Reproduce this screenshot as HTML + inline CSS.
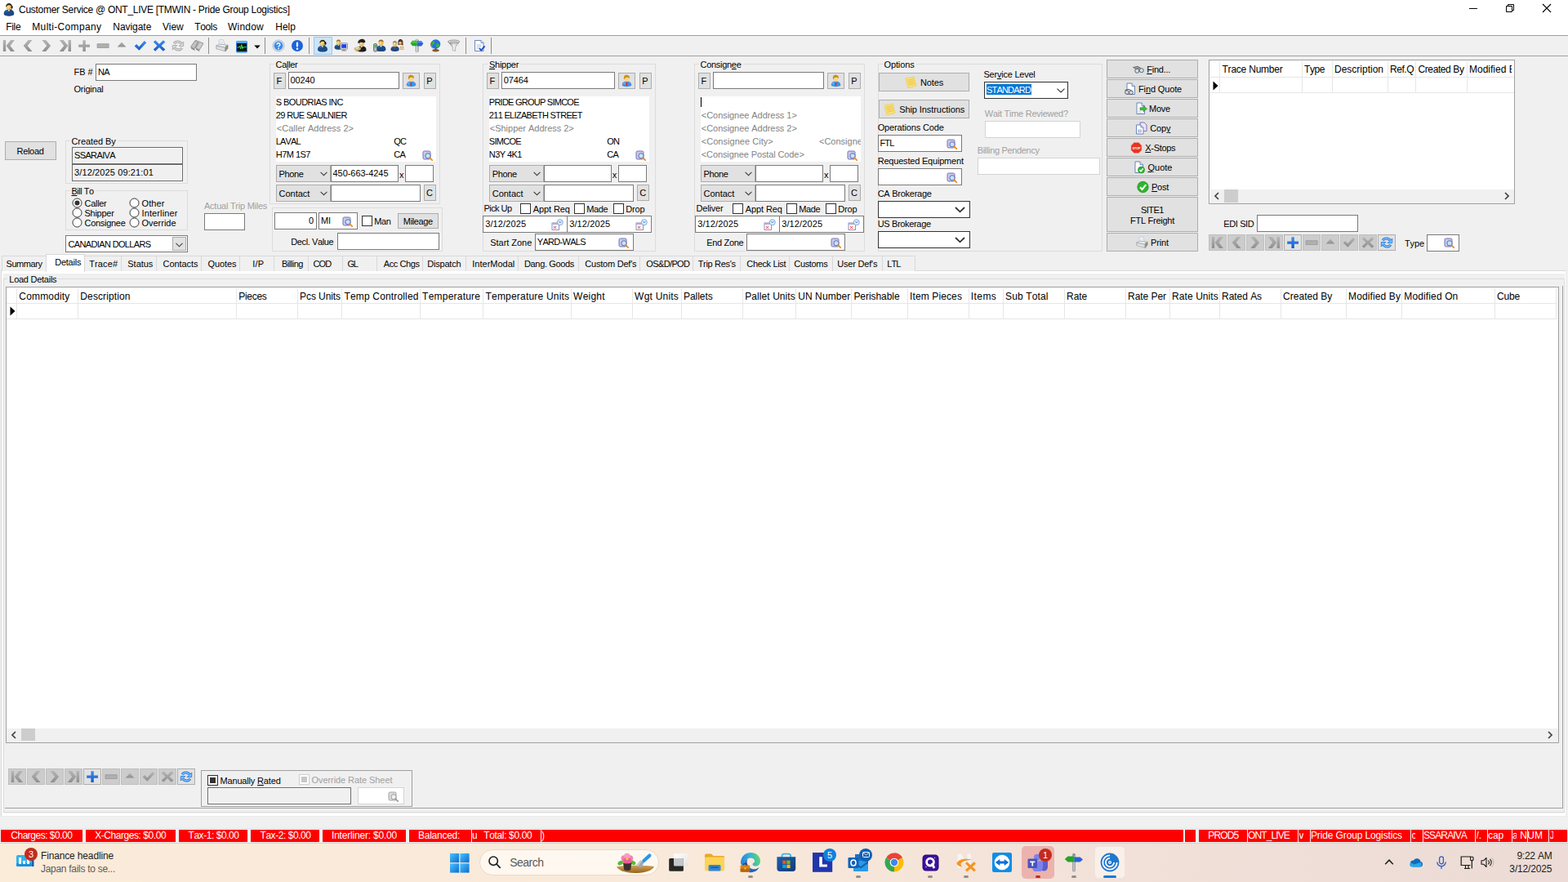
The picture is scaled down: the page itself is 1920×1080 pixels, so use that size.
<!DOCTYPE html><html lang="en"><head><meta charset="utf-8"><title>Customer Service @ ONT_LIVE [TMWIN - Pride Group Logistics]</title><style>
html,body{margin:0;padding:0}
body{width:1920px;height:1080px;position:relative;overflow:hidden;background:#f0f0f0;font-family:"Liberation Sans",sans-serif;font-size:11px;color:#000}
body div,body span,body svg{position:absolute;box-sizing:border-box}
span{white-space:nowrap}
.t{font-size:11px;color:#000}
.h{font-size:12px;color:#000}
span{font-kerning:none}
.s{font-size:12px;color:#000}
.g{color:#838383}
.d{color:#a0a0a0}
.in{background:#fff;border:1px solid #7a7a7a}
.btn{background:#e1e1e1;border:1px solid #adadad}
.grp{border:1px solid #dcdcdc}
.lbl{background:#f0f0f0;padding:0 2px}
.w{color:#fff}
u{text-decoration:underline;text-underline-offset:1px}
</style></head><body>
<svg width="0" height="0" style="position:absolute;left:0;top:0;overflow:hidden"><defs><linearGradient id="gg" x1="0" y1="0" x2="0" y2="1"><stop offset="0" stop-color="#b6b6b6"/><stop offset="1" stop-color="#8e8e8e"/></linearGradient><linearGradient id="gb" x1="0" y1="0" x2="0" y2="1"><stop offset="0" stop-color="#3f8ff0"/><stop offset="1" stop-color="#1558c8"/></linearGradient><symbol id="i-first" viewBox="0 0 16 16"><rect x="0.8" y="1" width="3.4" height="14" fill="url(#gg)"/><path d="M15 1L10.1 1L4.6 8L10.1 15L15 15L9.5 8Z" fill="url(#gg)"/></symbol><symbol id="i-prev" viewBox="0 0 16 16"><path d="M13.5 1L8.6 1L2.7 8L8.6 15L13.5 15L7.6000000000000005 8Z" fill="url(#gg)"/></symbol><symbol id="i-next" viewBox="0 0 16 16"><path d="M2.3 1L7.2 1L13.1 8L7.2 15L2.3 15L8.2 8Z" fill="url(#gg)"/></symbol><symbol id="i-last" viewBox="0 0 16 16"><rect x="11.6" y="1" width="3.4" height="14" fill="url(#gg)"/><path d="M0.8 1L5.7 1L11.2 8L5.7 15L0.8 15L6.299999999999999 8Z" fill="url(#gg)"/></symbol><symbol id="i-plus" viewBox="0 0 16 16"><path d="M6.4 1.2H9.8V6.4H15V9.8H9.8V15H6.4V9.8H1.2V6.4H6.4Z" fill="url(#gg)"/></symbol><symbol id="i-plusb" viewBox="0 0 16 16"><path d="M6.4 1.2H9.8V6.4H15V9.8H9.8V15H6.4V9.8H1.2V6.4H6.4Z" fill="url(#gb)"/></symbol><symbol id="i-minus" viewBox="0 0 16 16"><rect x="1.1" y="5.8" width="14" height="4.6" fill="#b0b0b0" stroke="#969696" stroke-width="0.8"/></symbol><symbol id="i-up" viewBox="0 0 16 16"><path d="M2.7 9.5L8 3.4L13.3 9.5Z" fill="url(#gg)"/></symbol><symbol id="i-check" viewBox="0 0 16 16"><path d="M0.6 8.6L3.2 6L6.2 9.2L12.8 2L15.3 4.3L6.4 13.8Z" fill="url(#gb)"/></symbol><symbol id="i-checkg" viewBox="0 0 16 16"><path d="M0.6 8.6L3.2 6L6.2 9.2L12.8 2L15.3 4.3L6.4 13.8Z" fill="url(#gg)"/></symbol><symbol id="i-x" viewBox="0 0 16 16"><path d="M0.8 3.4L3.2 1.2L8 6L12.8 1.2L15.4 3.4L10.5 8L15.4 12.4L12.8 14.8L8 10L3.2 14.8L0.8 12.4L5.5 8Z" fill="url(#gb)"/></symbol><symbol id="i-xg" viewBox="0 0 16 16"><path d="M0.8 3.4L3.2 1.2L8 6L12.8 1.2L15.4 3.4L10.5 8L15.4 12.4L12.8 14.8L8 10L3.2 14.8L0.8 12.4L5.5 8Z" fill="url(#gg)"/></symbol><symbol id="i-refresh" viewBox="0 0 16 16"><path d="M3.1 5.4A5.4 5.4 0 0 1 12.1 5.3" stroke="#a2a2a2" stroke-width="3" fill="none"/><path d="M12.9 10.6A5.4 5.4 0 0 1 3.9 10.7" stroke="#a2a2a2" stroke-width="3" fill="none"/><path d="M14.7 3V8.5H9.2Z" fill="#d9d9d9" stroke="#a2a2a2" stroke-width=".8" stroke-linejoin="round"/><path d="M1.3 13V7.5H6.8Z" fill="#d9d9d9" stroke="#a2a2a2" stroke-width=".8" stroke-linejoin="round"/><path d="M3.1 5.4A5.4 5.4 0 0 1 12.1 5.3" stroke="#d9d9d9" stroke-width="1.5" fill="none"/><path d="M12.9 10.6A5.4 5.4 0 0 1 3.9 10.7" stroke="#d9d9d9" stroke-width="1.5" fill="none"/></symbol><symbol id="i-refreshb" viewBox="0 0 16 16"><path d="M3.1 5.4A5.4 5.4 0 0 1 12.1 5.3" stroke="#1f73d6" stroke-width="3" fill="none"/><path d="M12.9 10.6A5.4 5.4 0 0 1 3.9 10.7" stroke="#1f73d6" stroke-width="3" fill="none"/><path d="M14.7 3V8.5H9.2Z" fill="#7cc0ff" stroke="#1f73d6" stroke-width=".8" stroke-linejoin="round"/><path d="M1.3 13V7.5H6.8Z" fill="#7cc0ff" stroke="#1f73d6" stroke-width=".8" stroke-linejoin="round"/><path d="M3.1 5.4A5.4 5.4 0 0 1 12.1 5.3" stroke="#7cc0ff" stroke-width="1.5" fill="none"/><path d="M12.9 10.6A5.4 5.4 0 0 1 3.9 10.7" stroke="#7cc0ff" stroke-width="1.5" fill="none"/></symbol><symbol id="i-books" viewBox="0 0 17 16"><path d="M0.5 9.5L5.5 2.2L9.5 3.6L5 11.8Z" fill="#c2c2c2" stroke="#8c8c8c" stroke-width="0.9"/><path d="M6.5 10.5L11.5 3.2L16 5.2L11 13.2Z" fill="#cdcdcd" stroke="#8c8c8c" stroke-width="0.9"/><path d="M0.5 9.5L5 11.8L5.8 14.2L1.2 11.8ZM6.5 10.5L11 13.2L11.3 15.2L7 12.8Z" fill="#8c8c8c"/><path d="M5.5 2.2L7 1.4L11.5 3.2M9.5 3.6L6.5 10.5" stroke="#8c8c8c" stroke-width=".8" fill="none"/></symbol><symbol id="i-printer" viewBox="0 0 16 16"><path d="M4 1L9.2 0.6L11 6.2L4.8 7.4Z" fill="#fbfdff" stroke="#a9b4c2" stroke-width=".6"/><path d="M5 2.4L8.8 2L9.8 5.2L5.6 6Z" fill="#dbe9fb"/><path d="M0.8 8L4.6 6.2L15 7.2L12 10.4Z" fill="#f2f2f2" stroke="#8c8c8c" stroke-width=".6"/><path d="M0.8 8L12 10.4V14.8L0.8 11.8Z" fill="#e2e2e2" stroke="#8c8c8c" stroke-width=".6"/><path d="M12 10.4L15 7.2V11.2L12 14.8Z" fill="#8f8f8f" stroke="#7a7a7a" stroke-width=".6"/><path d="M2 10.4L10.6 12.4V13.6L2 11.6Z" fill="#fff" stroke="#b6b6b6" stroke-width=".4"/><circle cx="12.6" cy="8.6" r=".8" fill="#3fc63f"/></symbol><symbol id="i-monitor" viewBox="0 0 16 16"><rect x="1" y="1" width="14" height="14.4" rx="1.6" fill="#2a8df0"/><rect x="1.8" y="1.8" width="12.4" height="1.2" fill="#7cc2ff"/><rect x="2" y="4.2" width="12" height="9.6" fill="#0a140c"/><path d="M2.4 9H4.6l1-1.8 1 3.8 1.2-5.4 1 5 .9-2.4.9 1.2.8-.8H13.6" stroke="#3ee24a" stroke-width="1" fill="none"/></symbol><symbol id="i-help" viewBox="0 0 16 16"><circle cx="8" cy="8" r="7" fill="#d8e3f0" stroke="#aab6c4" stroke-width="0.9"/><circle cx="8" cy="8" r="5.4" fill="#3c8be8"/><path d="M6.1 6.6a1.9 1.8 0 1 1 2.8 1.5c-.7.4-.9.8-.9 1.5" stroke="#fff" stroke-width="1.4" fill="none"/><circle cx="8" cy="11.4" r="0.85" fill="#fff"/></symbol><symbol id="i-info" viewBox="0 0 16 16"><circle cx="8" cy="8" r="7" fill="#1d63dc"/><rect x="6.9" y="3.4" width="2.2" height="6.2" rx="1" fill="#fff"/><circle cx="8" cy="11.8" r="1.25" fill="#fff"/></symbol><symbol id="i-app" viewBox="0 0 16 18"><path d="M1.7 14.86C1.7 11.08 4.43 9.82 8.0 9.82S14.3 11.08 14.3 14.86C14.3 17.17 11.15 17.8 8.0 17.8S1.7 17.17 1.7 14.86Z" fill="#1b4a86"/><path d="M3.17 12.55C4.22 10.66 6.42 10.35 7.16 10.45L5.9 13.18Z" fill="#2f6ab4" opacity=".8"/><path d="M6.32 9.72L8.0 12.13L9.68 9.72Z" fill="#f4f4f4"/><ellipse cx="8.0" cy="6.15" rx="3.26" ry="4.3" fill="#e6b955"/><ellipse cx="7.26" cy="6.46" rx="1.58" ry="2.31" fill="#f6dc96" opacity=".85"/><path d="M4.64 5.83C4.22 1.21 11.78 1.21 11.36 5.83C10.52 3.73 5.48 3.73 4.64 5.83Z" fill="#3a2a18"/><path d="M4.4 6.2A3.8 4.2 0 0 1 11.8 6" stroke="#1a1a1a" stroke-width="1" fill="none"/><ellipse cx="11.6" cy="6.8" rx="1.1" ry="1.7" fill="#1a1a1a"/><path d="M11.6 8.4C11.4 10 9.6 10.2 8.6 10" stroke="#1a1a1a" stroke-width=".8" fill="none"/></symbol><symbol id="i-p1" viewBox="0 0 17 17"><path d="M2.0 13.8C2.0 10.2 4.6 9.0 8.0 9.0S14.0 10.2 14.0 13.8C14.0 16.0 11.0 16.6 8.0 16.6S2.0 16.0 2.0 13.8Z" fill="#1b4a86"/><path d="M3.4 11.6C4.4 9.8 6.5 9.5 7.2 9.6L6.0 12.2Z" fill="#2f6ab4" opacity=".8"/><path d="M6.4 8.9L8.0 11.2L9.6 8.9Z" fill="#f4f4f4"/><ellipse cx="8.0" cy="5.5" rx="3.1" ry="4.1" fill="#e6b955"/><ellipse cx="7.3" cy="5.8" rx="1.5" ry="2.2" fill="#f6dc96" opacity=".85"/><path d="M4.8 5.2C4.4 0.8 11.6 0.8 11.2 5.2C10.4 3.2 5.6 3.2 4.8 5.2Z" fill="#5a3c1a"/><path d="M4.6 5.4A3.7 4.2 0 0 1 11.6 5.2" stroke="#1a1a1a" stroke-width="1" fill="none"/><ellipse cx="11.4" cy="6" rx="1.2" ry="1.8" fill="#1a1a1a"/><path d="M11.4 7.6C11.2 9.2 9.4 9.5 8.4 9.2" stroke="#1a1a1a" stroke-width=".8" fill="none"/></symbol><symbol id="i-p2" viewBox="0 0 17 17"><path d="M0.58 11.42C0.58 8.47 2.71 7.49 5.5 7.49S10.42 8.47 10.42 11.42C10.42 13.23 7.96 13.72 5.5 13.72S0.58 13.23 0.58 11.42Z" fill="#1b4a86"/><path d="M1.73 9.62C2.55 8.14 4.27 7.9 4.84 7.98L3.86 10.11Z" fill="#2f6ab4" opacity=".8"/><path d="M4.19 7.41L5.5 9.29L6.81 7.41Z" fill="#f4f4f4"/><ellipse cx="5.5" cy="4.62" rx="2.54" ry="3.36" fill="#e6b955"/><ellipse cx="4.93" cy="4.86" rx="1.23" ry="1.8" fill="#f6dc96" opacity=".85"/><path d="M2.88 4.37C2.55 0.76 8.45 0.76 8.12 4.37C7.47 2.73 3.53 2.73 2.88 4.37Z" fill="#8a6a30"/><rect x="7.8" y="5.8" width="8.7" height="7.4" rx=".8" fill="#e4e4e4" stroke="#7d7d7d" stroke-width=".8"/><rect x="9.2" y="7.2" width="5.9" height="4.6" fill="#1f3ff0"/><path d="M9 14.6H10.6L11 13.4H13.4L13.8 14.6H15.4V15.6H9Z" fill="#8d8d8d"/></symbol><symbol id="i-p3" viewBox="0 0 17 17"><path d="M4.1 13.94C4.1 10.52 6.57 9.38 9.8 9.38S15.5 10.52 15.5 13.94C15.5 16.03 12.65 16.6 9.8 16.6S4.1 16.03 4.1 13.94Z" fill="#1d1d1f"/><path d="M5.43 11.85C6.38 10.14 8.38 9.86 9.04 9.95L7.9 12.42Z" fill="#4a4a4e" opacity=".8"/><path d="M8.28 9.29L9.8 11.47L11.32 9.29Z" fill="#f4f4f4"/><ellipse cx="9.8" cy="6.05" rx="2.94" ry="3.89" fill="#e6b955"/><ellipse cx="9.14" cy="6.34" rx="1.42" ry="2.09" fill="#f6dc96" opacity=".85"/><path d="M6.76 5.77C6.38 1.59 13.22 1.59 12.84 5.77C12.08 3.87 7.52 3.87 6.76 5.77Z" fill="#1a1a1a"/><path d="M5 5.2C5.6 3 7 1 10 0.8S14.4 2.6 14.4 4.6L12.6 5.6C11 4.6 8 4.8 5 5.2Z" fill="#202024"/><path d="M5 5.2L8.4 5.4L6 6.2Z" fill="#111"/><path d="M1 11.8L6 10.2L8.6 11.6L3.8 13.8Z" fill="#f1e2b8" stroke="#b89a62" stroke-width=".5"/><path d="M1 11.8V13.8L3.8 16V13.8ZM3.8 13.8L8.6 11.6V13.6L3.8 16Z" fill="#d6bd88" stroke="#b89a62" stroke-width=".4"/></symbol><symbol id="i-p4" viewBox="0 0 17 17"><path d="M4.78 13.4C4.78 9.91 7.3 8.75 10.6 8.75S16.42 9.91 16.42 13.4C16.42 15.54 13.51 16.12 10.6 16.12S4.78 15.54 4.78 13.4Z" fill="#1b4a86"/><path d="M6.14 11.27C7.11 9.52 9.14 9.23 9.82 9.33L8.66 11.85Z" fill="#2f6ab4" opacity=".8"/><path d="M9.05 8.65L10.6 10.88L12.15 8.65Z" fill="#f4f4f4"/><ellipse cx="10.6" cy="5.35" rx="3.01" ry="3.98" fill="#e6b955"/><ellipse cx="9.92" cy="5.64" rx="1.46" ry="2.13" fill="#f6dc96" opacity=".85"/><path d="M7.5 5.06C7.11 0.79 14.09 0.79 13.7 5.06C12.93 3.12 8.27 3.12 7.5 5.06Z" fill="#8a6a30"/><rect x="1.6" y="6.6" width="4" height="9.4" rx="1.2" fill="#b9bec4" stroke="#50565c" stroke-width=".8"/><rect x="2.5" y="7.8" width="2.2" height="3.6" fill="#35c235"/></symbol><symbol id="i-p5" viewBox="0 0 17 17"><path d="M9.6 6.5C9 2 11 1 12.4 1S16 2.4 15.4 7L15.6 11H9.6Z" fill="#2a211c"/><path d="M8.08 11.1C8.08 8.51 9.95 7.65 12.4 7.65S16.72 8.51 16.72 11.1C16.72 12.69 14.56 13.12 12.4 13.12S8.08 12.69 8.08 11.1Z" fill="#efe6d8"/><path d="M9.09 9.52C9.81 8.22 11.32 8.01 11.82 8.08L10.96 9.95Z" fill="#fff" opacity=".8"/><path d="M11.25 7.58L12.4 9.23L13.55 7.58Z" fill="#f4f4f4"/><ellipse cx="12.4" cy="5.13" rx="2.23" ry="2.95" fill="#b9784a"/><ellipse cx="11.9" cy="5.34" rx="1.08" ry="1.58" fill="#f6dc96" opacity=".85"/><path d="M10.1 4.91C9.81 1.74 14.99 1.74 14.7 4.91C14.13 3.47 10.67 3.47 10.1 4.91Z" fill="#2a211c"/><rect x="12.6" y="10.4" width="3.4" height="3.4" fill="#e6d4a6" stroke="#a98d52" stroke-width=".4"/><path d="M0.44 13.55C0.44 10.46 2.68 9.42 5.6 9.42S10.76 10.46 10.76 13.55C10.76 15.44 8.18 15.96 5.6 15.96S0.44 15.44 0.44 13.55Z" fill="#1b4a86"/><path d="M1.64 11.66C2.5 10.11 4.31 9.85 4.91 9.94L3.88 12.18Z" fill="#2f6ab4" opacity=".8"/><path d="M4.22 9.34L5.6 11.32L6.98 9.34Z" fill="#f4f4f4"/><ellipse cx="5.6" cy="6.41" rx="2.67" ry="3.53" fill="#e6b955"/><ellipse cx="5.0" cy="6.67" rx="1.29" ry="1.89" fill="#f6dc96" opacity=".85"/><path d="M2.85 6.16C2.5 2.37 8.7 2.37 8.35 6.16C7.66 4.44 3.54 4.44 2.85 6.16Z" fill="#70809a"/><path d="M5 10L5.6 14.4L6.4 10Z" fill="#d23a2a"/></symbol><symbol id="i-sign" viewBox="0 0 17 17"><defs><linearGradient id="pole" x1="0" y1="0" x2="1" y2="0"><stop offset="0" stop-color="#8a8f96"/><stop offset=".45" stop-color="#f4f5f6"/><stop offset="1" stop-color="#7d838a"/></linearGradient></defs><rect x="7" y="1.2" width="3.2" height="15.4" rx="1.2" fill="url(#pole)" stroke="#6d737a" stroke-width=".4"/><path d="M0.6 6L3 2.8H8.6V9.2H3Z" fill="#1fae1f"/><path d="M1.6 5.6L3.4 3.6H8.6V5.4Z" fill="#5fdc5f" opacity=".7"/><path d="M8.6 3.2H14L16.4 6.2L14 9.4H8.6Z" fill="#2a5fd0"/><path d="M8.6 3.8H13.6L15.2 5.6H8.6Z" fill="#6a95ee" opacity=".7"/></symbol><symbol id="i-globe" viewBox="0 0 17 17"><ellipse cx="8.5" cy="14.8" rx="4.2" ry="1.7" fill="#8a5a34"/><rect x="7.6" y="12" width="1.8" height="2.5" fill="#6d4426"/><circle cx="8.5" cy="7" r="5.8" fill="#2a6fe0"/><path d="M5 3.5C7 3 8 4.5 7 6S4.5 7.5 4.2 9.5C3 8 3 5 5 3.5ZM9.5 6.5C11.5 5.8 13.2 7 12.8 9S10.5 12 9.5 10.8 8.5 7.5 9.5 6.5Z" fill="#36b24a"/><path d="M3.4 4.4A6.6 6.6 0 0 0 5 12.4" stroke="#7d6a3a" stroke-width=".9" fill="none"/></symbol><symbol id="i-funnel" viewBox="0 0 17 17"><defs><linearGradient id="fun" x1="0" y1="0" x2="1" y2="0"><stop offset="0" stop-color="#6a6a6a"/><stop offset=".5" stop-color="#f2f2f2"/><stop offset="1" stop-color="#b0b0b0"/></linearGradient></defs><path d="M1.6 4H15.6L10.6 11V15.6L7.2 14.6V11Z" fill="url(#fun)" stroke="#8a8a8a" stroke-width=".5"/><ellipse cx="8.6" cy="4" rx="7" ry="2" fill="#e9e9e9" stroke="#7a7a7a" stroke-width=".7"/><ellipse cx="8.6" cy="4.2" rx="5" ry="1.1" fill="#9a9a9a" opacity=".55"/></symbol><symbol id="i-doc" viewBox="0 0 16 16"><path d="M2.5 1.5H10L13 4.5V14.5H2.5Z" fill="#fff" stroke="#5a78b8" stroke-width=".9"/><path d="M10 1.5V4.5H13" fill="#dfe8f8" stroke="#5a78b8" stroke-width=".8"/><path d="M4.5 7H10.5M4.5 9H10.5M4.5 11H8" stroke="#a9b9d8" stroke-width=".9"/><path d="M8 11.2L10.2 13.6L14.6 8.4" stroke="#1d4fd0" stroke-width="1.9" fill="none"/></symbol><symbol id="i-cust" viewBox="0 0 14 16"><path d="M1.8 13.8C1.6 10 3.8 8.4 7.4 8.4S13.4 10 13.3 13.8C11 15.6 4 15.6 1.8 13.8Z" fill="#3d93ea"/><path d="M3 12C3.4 10.4 4.6 9.6 5.8 9.4L5 12.6Z" fill="#7cbcf8" opacity=".8"/><path d="M5.9 8.3L7.4 10L8.9 8.3L8.4 7H6.4Z" fill="#fbb95a"/><path d="M7 9.4H7.9L8.3 13L7.5 14.2L6.6 13Z" fill="#e8231c"/><ellipse cx="7.5" cy="5.7" rx="2.9" ry="2.8" fill="#fdd391"/><path d="M4 5.4C3.2 1.6 6 0.4 8 0.8S11.6 2.6 10.8 5.2C10 3.8 8.6 3.4 7.2 3.8S5 4.4 4.6 6.4Z" fill="#c8920f"/></symbol><symbol id="i-look" viewBox="0 0 13 13"><path d="M1 2.5Q1 1 2.5 1H8.5Q10 1 10 2.5V9.5Q10 11 8.5 11H2.5Q1 11 1 9.5Z" fill="#c9c9ee" stroke="#6a6aa8" stroke-width=".9"/><circle cx="7" cy="6.8" r="3.1" fill="#bfe6ff" stroke="#6a6aa8" stroke-width="1"/><path d="M9.3 9.3L12.2 12.2" stroke="#f08a1c" stroke-width="1.8" stroke-linecap="round"/></symbol><symbol id="i-lookg" viewBox="0 0 13 13"><path d="M1 2.5Q1 1 2.5 1H8.5Q10 1 10 2.5V9.5Q10 11 8.5 11H2.5Q1 11 1 9.5Z" fill="#dddddd" stroke="#9a9a9a" stroke-width=".9"/><circle cx="7" cy="6.8" r="3.1" fill="#f0f0f0" stroke="#9a9a9a" stroke-width="1"/><path d="M9.3 9.3L12.2 12.2" stroke="#9a9a9a" stroke-width="1.8" stroke-linecap="round"/></symbol><symbol id="i-cal" viewBox="0 0 15 14"><rect x="1" y="5" width="8.5" height="8.5" fill="#fff" stroke="#7d86b8" stroke-width=".9"/><rect x="1" y="5" width="8.5" height="2" fill="#a9b0dd"/><path d="M3 9L6 12M6 9L3 12" stroke="#e23a2a" stroke-width="1"/><circle cx="10.8" cy="4.2" r="3.5" fill="#dff0ff" stroke="#7d9ec8" stroke-width=".9"/><path d="M9.4 3.2L10.8 4.8L12.2 3.2" stroke="#2a62b8" stroke-width=".9" fill="none"/></symbol><symbol id="i-note" viewBox="0 0 15 16"><path d="M1 3.2L11.2 1L14 12.2L4 14.8Z" fill="#fbe27a" stroke="#e9c84a" stroke-width=".7"/><path d="M3 5.4L10.8 3.6M3.5 7.4L11.3 5.6M4 9.4L11.8 7.6M4.5 11.4L12.3 9.6" stroke="#e3bd3f" stroke-width=".8"/></symbol><symbol id="i-binoc" viewBox="0 0 15 16"><path d="M1.5 5.5L7 4.2L10.5 6.2L5.5 8Z" fill="#9a9a9a" stroke="#555" stroke-width=".7"/><circle cx="6.3" cy="9.8" r="2.5" fill="#cfe6fb" stroke="#555" stroke-width=".9"/><circle cx="11.8" cy="9.2" r="2.5" fill="#cfe6fb" stroke="#555" stroke-width=".9"/></symbol><symbol id="i-findq" viewBox="0 0 15 16"><path d="M4 1H10L13.5 4.5V14.5H4Z" fill="#fff" stroke="#5a78b8" stroke-width=".9"/><path d="M10 1V4.5H13.5" fill="#dfe8f8" stroke="#5a78b8" stroke-width=".8"/><circle cx="4" cy="12" r="2.4" fill="#d9d9d9" stroke="#555" stroke-width=".9"/><circle cx="9" cy="12.3" r="2.4" fill="#d9d9d9" stroke="#555" stroke-width=".9"/><path d="M1.5 9.5L6 8.4L9.5 9.8" stroke="#555" stroke-width="1" fill="none"/></symbol><symbol id="i-move" viewBox="0 0 15 16"><path d="M2 1H8L11.5 4.5V14.5H2Z" fill="#fff" stroke="#5a78b8" stroke-width=".9"/><path d="M8 1V4.5H11.5" fill="#dfe8f8" stroke="#5a78b8" stroke-width=".8"/><path d="M3.5 11H8M3.5 13H8" stroke="#b9c6e2" stroke-width=".9"/><path d="M6 6.8H10V4.8L14.5 8.2L10 11.6V9.6H6Z" fill="#3fc03f" stroke="#1f8a1f" stroke-width=".7"/></symbol><symbol id="i-copy" viewBox="0 0 15 16"><path d="M6 1H11L14 4V11.5H6Z" fill="#ece6f8" stroke="#7a68b0" stroke-width=".9"/><path d="M1.5 4H7L10 7V15H1.5Z" fill="#fff" stroke="#5a78b8" stroke-width=".9"/><path d="M7 4V7H10" fill="#dfe8f8" stroke="#5a78b8" stroke-width=".8"/><rect x="3" y="9.5" width="5" height="4" fill="#b9c6ea"/></symbol><symbol id="i-stop" viewBox="0 0 15 16"><path d="M4.7 1.5H10.3L14 5.2V10.8L10.3 14.5H4.7L1 10.8V5.2Z" fill="#e8341c" stroke="#f5a090" stroke-width=".6"/><text x="7.5" y="9.6" font-family="Liberation Sans,sans-serif" font-size="4.4" font-weight="bold" fill="#fff" text-anchor="middle" textLength="9.6" lengthAdjust="spacingAndGlyphs">STOP</text></symbol><symbol id="i-quote" viewBox="0 0 15 16"><path d="M2 1H8L11.5 4.5V14.5H2Z" fill="#fff" stroke="#5a78b8" stroke-width=".9"/><path d="M8 1V4.5H11.5" fill="#dfe8f8" stroke="#5a78b8" stroke-width=".8"/><circle cx="9.5" cy="11" r="4" fill="#2db52d" stroke="#178a17" stroke-width=".6"/><path d="M7.4 11L9 12.8L11.8 9.3" stroke="#fff" stroke-width="1.4" fill="none"/></symbol><symbol id="i-post" viewBox="0 0 15 16"><circle cx="7.5" cy="8" r="6.7" fill="#2db52d" stroke="#178a17" stroke-width=".7"/><path d="M4 8.2L6.6 11L11.2 5.2" stroke="#fff" stroke-width="2.1" fill="none"/></symbol><symbol id="i-garden" viewBox="0 0 47 25"><defs><linearGradient id="soil" x1="0" y1="0" x2="0" y2="1"><stop offset="0" stop-color="#cfa056"/><stop offset="1" stop-color="#96631f"/></linearGradient></defs><path d="M0 17.2C8 15.4 38 15.4 46.2 17.2C42 23.6 31 25 22 25C12 25 3 22.4 0 17.2Z" fill="url(#soil)"/><ellipse cx="4.8" cy="12.6" rx="3.6" ry="2.5" transform="rotate(-28 4.8 12.6)" fill="#5cb83c"/><ellipse cx="20" cy="12.4" rx="3.6" ry="2.5" transform="rotate(28 20 12.4)" fill="#5cb83c"/><path d="M8 12.6H18.4L17.2 21C15 22.4 11 22.4 9.2 21Z" fill="#3b302f"/><circle cx="9.4" cy="7" r="3.8" fill="#f482b2"/><circle cx="16.4" cy="7" r="3.8" fill="#f482b2"/><circle cx="12.9" cy="4.6" r="3.8" fill="#f89cc4"/><circle cx="11.4" cy="10" r="3.4" fill="#ee5e98"/><circle cx="14.6" cy="10" r="3.4" fill="#ee5e98"/><circle cx="12.9" cy="7.6" r="1.7" fill="#f6c63a"/><path d="M24 15.6L29.2 9.4L33.8 11.6L30.4 18.8Z" fill="#9da8b4"/><path d="M24 15.6L29.2 9.4L31 10.2L26.4 16.8Z" fill="#c3cbd3"/><path d="M33.4 10L40.4 3.6" stroke="#2d95e6" stroke-width="4.2" stroke-linecap="round"/></symbol><symbol id="i-taskview" viewBox="0 0 26 24"><defs><linearGradient id="tvw" x1="0" y1="0" x2="1" y2="1"><stop offset="0" stop-color="#ffffff"/><stop offset="1" stop-color="#e6e4e2"/></linearGradient></defs><rect x="7" y="1.2" width="17.9" height="15.4" rx="1.6" fill="url(#tvw)"/><rect x="1.2" y="7" width="17.7" height="15.8" rx="1.6" fill="#262626"/><path d="M7 7H17.3Q18.9 7 18.9 8.6V16.6H8.6Q7 16.6 7 15Z" fill="#c6c6c6"/></symbol><symbol id="i-folder" viewBox="0 0 26 24"><path d="M1 3.2Q1 1.5 2.7 1.5H9L11.5 4H23.3Q25 4 25 5.7V8H1Z" fill="#e8a928"/><rect x="1" y="5.5" width="24" height="17" rx="1.8" fill="#fdd354"/><rect x="5.5" y="15" width="15" height="7.5" rx="1.5" fill="#2f86dc"/><rect x="8" y="17.3" width="10" height="1.8" rx=".9" fill="#1a5fa8"/></symbol><symbol id="i-edge" viewBox="0 0 26 26"><defs><linearGradient id="edg" x1="0" y1="0.3" x2="1" y2="0.1"><stop offset="0" stop-color="#2a84dc"/><stop offset=".45" stop-color="#2fb3d8"/><stop offset="1" stop-color="#6cd95e"/></linearGradient></defs><path d="M1 13.5C1 5.5 7 1 13.5 1C20 1 25 5.5 25 11.2C25 15.2 22.4 17.6 19 17.6C16.4 17.6 15 16 15.8 14.2C17.6 13.8 18.6 12.4 18 10.6C17 7.6 13 6.8 9.6 8.4C5.6 10.4 4.6 15 6.6 19.2C3 17.6 1 15.8 1 13.5Z" fill="url(#edg)"/><path d="M6.6 19.2C4.6 15 5.6 10.6 9.6 8.4C7.8 11.2 8.2 16 11.8 19.2C15.2 22.2 20 21.8 23.6 19C21.6 23.2 17.6 25.2 13.6 25.2C9.6 25.2 7.6 22.6 6.6 19.2Z" fill="#1a67c2"/><rect x="0.6" y="16.6" width="11.6" height="8.2" rx="1" fill="#d9831c"/><rect x="0.6" y="20.4" width="11.6" height="4.4" rx="1" fill="#b86612"/><path d="M4.2 16.6V15.6Q4.2 14.6 5.2 14.6H7.6Q8.6 14.6 8.6 15.6V16.6" stroke="#5a3a16" stroke-width="1.1" fill="none"/><rect x="5.6" y="19.6" width="1.8" height="1.8" fill="#f8d460"/></symbol><symbol id="i-store" viewBox="0 0 26 24"><defs><linearGradient id="stg" x1="0" y1="0" x2="1" y2="1"><stop offset="0" stop-color="#1a5fb4"/><stop offset="1" stop-color="#123a78"/></linearGradient></defs><path d="M7.4 6.4V4.4Q7.4 1.6 10.2 1.6H15.4Q18.2 1.6 18.2 4.4V6.4" stroke="#38b4f0" stroke-width="1.8" fill="none"/><path d="M1.4 5.2H24.2V19.6Q24.2 23 20.8 23H4.8Q1.4 23 1.4 19.6Z" fill="url(#stg)"/><rect x="8.2" y="9.6" width="4.3" height="4.3" fill="#f25022"/><rect x="13.3" y="9.6" width="4.3" height="4.3" fill="#7fba00"/><rect x="8.2" y="14.7" width="4.3" height="4.3" fill="#00a4ef"/><rect x="13.3" y="14.7" width="4.3" height="4.3" fill="#ffb900"/></symbol><symbol id="i-lapp" viewBox="0 0 25 24"><rect x="0" y="0" width="24.2" height="23.8" fill="#2136ae"/><path d="M7.6 6.2L9 5.4V16.4L7.6 17.4Z" fill="#0c1a66"/><path d="M8.2 5.3H11.8V14.6H17.9V17.4H8.2Z" fill="#fff"/></symbol><symbol id="i-outlook" viewBox="0 0 26 24"><path d="M9 2H24Q25 2 25 3V14H9Z" fill="#1a73c8"/><path d="M7 10H25V22Q25 23 24 23H8Q7 23 7 22Z" fill="#2a9be8"/><path d="M7 10L16 17L25 10V13L16 19.5L7 13Z" fill="#1563b0"/><rect x="0.5" y="6" width="13" height="13" rx="1.3" fill="#0f62b8"/><ellipse cx="7" cy="12.5" rx="3" ry="3.5" fill="none" stroke="#fff" stroke-width="1.6"/></symbol><symbol id="i-chrome" viewBox="0 0 24 24"><circle cx="12" cy="12" r="11.5" fill="#fff"/><path d="M12 12L2.04 6.25A11.5 11.5 0 0 1 21.96 6.25Z" fill="#ea4335"/><path d="M12 12L21.96 6.25A11.5 11.5 0 0 1 12 23.5Z" fill="#fbbc04"/><path d="M12 12L12 23.5A11.5 11.5 0 0 1 2.04 6.25Z" fill="#34a853"/><path d="M12 0.5A11.5 11.5 0 0 1 21.96 6.25H12Z" fill="#ea4335"/><circle cx="12" cy="12" r="5.3" fill="#fff"/><circle cx="12" cy="12" r="4.2" fill="#4285f4"/></symbol><symbol id="i-qapp" viewBox="0 0 21 21"><rect x="0.5" y="0.5" width="20" height="20" rx="4.5" fill="#2c0a82"/><rect x="1.8" y="1.8" width="17.4" height="17.4" rx="3.6" fill="#4a18b0" opacity=".5"/><circle cx="10" cy="9.6" r="4.4" fill="none" stroke="#fff" stroke-width="2.8"/><path d="M12 11L15 17" stroke="#fff" stroke-width="2.8"/><circle cx="5" cy="15.5" r=".8" fill="#e9a8ff"/><circle cx="15.5" cy="4.5" r=".7" fill="#e9a8ff"/></symbol><symbol id="i-nx" viewBox="0 0 26 24"><path d="M2 1.2L7 0.4L14 13V1L19.6 0.4V17L14.6 19.6L7.2 7V19L2 20Z" fill="#f6f3f0" stroke="#e6dfd9" stroke-width=".5"/><path d="M1.4 13C4 8.4 12 6.4 20.4 9C14 8.8 9.4 10 6.8 13C6.2 14.6 6.8 16 8.4 17.6C4.6 17 2 15.6 1.4 13Z" fill="#f7941d"/><path d="M13 12.4L23.8 22.4M23.8 12.4L13 22.4" stroke="#f7941d" stroke-width="3.3"/></symbol><symbol id="i-tv" viewBox="0 0 24 24"><rect x="0" y="0" width="24" height="24" rx="2.2" fill="#0e8ee9"/><circle cx="12" cy="12" r="9.3" fill="#fff"/><path d="M3.8 12L9.3 8V10.6H14.7V8L20.2 12L14.7 16V13.4H9.3V16Z" fill="#0e6fd6"/></symbol><symbol id="i-teams" viewBox="0 0 26 22"><circle cx="19" cy="5.5" r="3.6" fill="#5b5fc7"/><path d="M14 9.5H25V16.5A4.8 4.8 0 0 1 15.4 17Z" fill="#5b5fc7"/><circle cx="12" cy="4.8" r="4" fill="#7b83eb"/><path d="M6 9.5H19V17A6.5 6.5 0 0 1 6 17Z" fill="#7b83eb"/><rect x="0.5" y="6.5" width="11.5" height="11.5" rx="1.3" fill="#4b53bc"/><path d="M3.2 9.6H9.3V11.2H7.1V15.6H5.4V11.2H3.2Z" fill="#fff"/></symbol><symbol id="i-signbig" viewBox="0 0 24 24"><rect x="10.5" y="2" width="3" height="21" rx="1" fill="#b8bfc6" stroke="#7d868f" stroke-width=".6"/><circle cx="12" cy="2.5" r="1.7" fill="#8a939c"/><path d="M0.8 8L4.5 4.5H12.5V11.5H4.5Z" fill="#27a327"/><path d="M12.5 5.5H19.5L23 8.5L19.5 11.5H12.5Z" fill="#2a62d6"/></symbol><symbol id="i-spiral" viewBox="0 0 24 24"><circle cx="12" cy="12" r="11.4" fill="#1f78d0"/><path d="M12 3.3A8.7 8.7 0 1 0 20.7 12" stroke="#fff" stroke-width="1.8" fill="none"/><path d="M12 6.9A5.1 5.1 0 1 0 17.1 12" stroke="#fff" stroke-width="1.8" fill="none"/><circle cx="12" cy="12" r="2" fill="#fff"/><circle cx="12" cy="12" r=".8" fill="#1f78d0"/></symbol></defs></svg>
<div style="left:0px;top:0px;width:1920px;height:43px;background:#fff"></div>
<span class="s" style="left:23px;top:3.84px;height:16px;line-height:16px;font-size:12px;letter-spacing:-0.28px;">Customer Service @ ONT_LIVE [TMWIN - Pride Group Logistics]</span>
<span class="s" style="left:7.3px;top:24.84px;height:16px;line-height:16px;font-size:12px;letter-spacing:-0.34px;">File</span>
<span class="s" style="left:39.3px;top:24.84px;height:16px;line-height:16px;font-size:12px;letter-spacing:0.33px;">Multi-Company</span>
<span class="s" style="left:138.3px;top:24.84px;height:16px;line-height:16px;font-size:12px;letter-spacing:-0.05px;">Navigate</span>
<span class="s" style="left:199px;top:24.84px;height:16px;line-height:16px;font-size:12px;letter-spacing:-0.13px;">View</span>
<span class="s" style="left:238.3px;top:24.84px;height:16px;line-height:16px;font-size:12px;letter-spacing:-0.37px;">Tools</span>
<span class="s" style="left:279px;top:24.84px;height:16px;line-height:16px;font-size:12px;letter-spacing:0.22px;">Window</span>
<span class="s" style="left:337.3px;top:24.84px;height:16px;line-height:16px;font-size:12px;letter-spacing:-0.05px;">Help</span>
<svg style="left:1798px;top:4px;" width="12" height="12" viewBox="0 0 12 12"><path d="M1 6.5H11" stroke="#000" stroke-width="1" fill="none"/></svg>
<svg style="left:1843px;top:4px;" width="12" height="12" viewBox="0 0 12 12"><path d="M1.5 3.5H8.5V10.5H1.5Z M3.5 3.5V1.5H10.5V8.5H8.5" stroke="#000" stroke-width="1" fill="none"/></svg>
<svg style="left:1888px;top:4px;" width="12" height="12" viewBox="0 0 12 12"><path d="M1 1L11 11M11 1L1 11" stroke="#000" stroke-width="1.1" fill="none"/></svg>
<svg style="left:3px;top:2px;" width="16" height="18"><use href="#i-app"/></svg>
<div style="left:0px;top:43px;width:1920px;height:1px;background:#a0a0a0"></div>
<div style="left:0px;top:68px;width:1920px;height:1px;background:#a0a0a0"></div>
<svg style="left:3px;top:48px;" width="16" height="16"><use href="#i-first"/></svg>
<svg style="left:26px;top:48px;" width="16" height="16"><use href="#i-prev"/></svg>
<svg style="left:49px;top:48px;" width="16" height="16"><use href="#i-next"/></svg>
<svg style="left:72px;top:48px;" width="16" height="16"><use href="#i-last"/></svg>
<svg style="left:95px;top:48px;" width="16" height="16"><use href="#i-plus"/></svg>
<svg style="left:118px;top:48px;" width="16" height="16"><use href="#i-minus"/></svg>
<svg style="left:141px;top:48px;" width="16" height="16"><use href="#i-up"/></svg>
<svg style="left:164px;top:48px;" width="16" height="16"><use href="#i-check"/></svg>
<svg style="left:187px;top:48px;" width="16" height="16"><use href="#i-x"/></svg>
<svg style="left:210px;top:48px;" width="16" height="16"><use href="#i-refresh"/></svg>
<svg style="left:232.7px;top:48px;" width="17" height="16"><use href="#i-books"/></svg>
<div style="left:255px;top:46px;width:1px;height:20px;background:#8d8d8d"></div>
<div style="left:324px;top:46px;width:1px;height:20px;background:#8d8d8d"></div>
<div style="left:378px;top:46px;width:1px;height:20px;background:#8d8d8d"></div>
<div style="left:570px;top:46px;width:1px;height:20px;background:#8d8d8d"></div>
<div style="left:601px;top:46px;width:1px;height:20px;background:#8d8d8d"></div>
<svg style="left:264px;top:48.2px;" width="16" height="16"><use href="#i-printer"/></svg>
<svg style="left:288px;top:48.6px;" width="16" height="16"><use href="#i-monitor"/></svg>
<svg style="left:310.5px;top:54.8px;" width="8" height="5" viewBox="0 0 8 5"><path d="M0.3 0.4H7.7L4 4.6Z" fill="#000"/></svg>
<svg style="left:333px;top:48px;" width="16" height="16"><use href="#i-help"/></svg>
<svg style="left:356px;top:48px;" width="16" height="16"><use href="#i-info"/></svg>
<div style="left:384px;top:45px;width:23px;height:22px;background:#cce4f7;border:1px solid #99c9ef"></div>
<svg style="left:387.3px;top:46.8px;" width="17" height="17"><use href="#i-p1"/></svg>
<svg style="left:409px;top:46.8px;" width="17" height="17"><use href="#i-p2"/></svg>
<svg style="left:432.8px;top:46.8px;" width="17" height="17"><use href="#i-p3"/></svg>
<svg style="left:455.7px;top:46.8px;" width="17" height="17"><use href="#i-p4"/></svg>
<svg style="left:478.2px;top:46.8px;" width="17" height="17"><use href="#i-p5"/></svg>
<svg style="left:501.8px;top:46.8px;" width="17" height="17"><use href="#i-sign"/></svg>
<svg style="left:524.8px;top:46.8px;" width="17" height="17"><use href="#i-globe"/></svg>
<svg style="left:547.3px;top:46.8px;" width="17" height="17"><use href="#i-funnel"/></svg>
<svg style="left:578.6px;top:48px;" width="16" height="16"><use href="#i-doc"/></svg>
<span class="t" style="left:90.5px;top:81.19px;height:14px;line-height:14px;font-size:11px;letter-spacing:-0.06px;">FB #</span>
<div class="in" style="left:117px;top:78px;width:124px;height:21px;"></div>
<span class="t" style="left:120px;top:81.19px;height:14px;line-height:14px;font-size:11px;letter-spacing:-0.64px;">NA</span>
<span class="t" style="left:90.5px;top:102.19px;height:14px;line-height:14px;font-size:11px;letter-spacing:-0.24px;">Original</span>
<div class="btn" style="left:6px;top:173px;width:63px;height:23px;"></div>
<span class="t" style="left:5.5px;top:177.69px;height:14px;line-height:14px;font-size:11px;width:63px;text-align:center;letter-spacing:-0.31px;">Reload</span>
<div class="grp" style="left:80px;top:172px;width:150px;height:53px;"></div>
<span class="t lbl" style="left:85.5px;top:165.89px;height:14px;line-height:14px;font-size:11px;letter-spacing:-0.10px;">Created By</span>
<div style="left:88px;top:180px;width:136px;height:21px;border:1px solid #6b6b6b;box-shadow:inset 0 0 0 1px #fafafa;background:#f0f0f0"></div>
<span class="t" style="left:91px;top:182.69px;height:14px;line-height:14px;font-size:11px;letter-spacing:-0.63px;">SSARAIVA</span>
<div style="left:88px;top:201px;width:136px;height:21px;border:1px solid #6b6b6b;box-shadow:inset 0 0 0 1px #fafafa;background:#f0f0f0"></div>
<span class="t" style="left:91px;top:203.69px;height:14px;line-height:14px;font-size:11px;letter-spacing:0.12px;">3/12/2025 09:21:01</span>
<div class="grp" style="left:80px;top:233px;width:150px;height:49px;"></div>
<span class="t lbl" style="left:85.5px;top:226.69px;height:14px;line-height:14px;font-size:11px;letter-spacing:-0.51px;"><u>B</u>ill To</span>
<svg style="left:87.5px;top:241.5px;" width="13" height="13" viewBox="0 0 13 13"><circle cx="6.5" cy="6.5" r="5.5" fill="#fff" stroke="#333" stroke-width="1"/><circle cx="6.5" cy="6.5" r="3" fill="#333"/></svg>
<svg style="left:157.5px;top:241.5px;" width="13" height="13" viewBox="0 0 13 13"><circle cx="6.5" cy="6.5" r="5.5" fill="#fff" stroke="#333" stroke-width="1"/></svg>
<span class="t" style="left:103.5px;top:242.09px;height:14px;line-height:14px;font-size:11px;letter-spacing:-0.29px;">Caller</span>
<span class="t" style="left:173.5px;top:242.09px;height:14px;line-height:14px;font-size:11px;letter-spacing:0.10px;">Other</span>
<svg style="left:87.5px;top:253.5px;" width="13" height="13" viewBox="0 0 13 13"><circle cx="6.5" cy="6.5" r="5.5" fill="#fff" stroke="#333" stroke-width="1"/></svg>
<svg style="left:157.5px;top:253.5px;" width="13" height="13" viewBox="0 0 13 13"><circle cx="6.5" cy="6.5" r="5.5" fill="#fff" stroke="#333" stroke-width="1"/></svg>
<span class="t" style="left:103.5px;top:254.09px;height:14px;line-height:14px;font-size:11px;letter-spacing:-0.27px;">Shipper</span>
<span class="t" style="left:173.5px;top:254.09px;height:14px;line-height:14px;font-size:11px;letter-spacing:0.12px;">Interliner</span>
<svg style="left:87.5px;top:265.5px;" width="13" height="13" viewBox="0 0 13 13"><circle cx="6.5" cy="6.5" r="5.5" fill="#fff" stroke="#333" stroke-width="1"/></svg>
<svg style="left:157.5px;top:265.5px;" width="13" height="13" viewBox="0 0 13 13"><circle cx="6.5" cy="6.5" r="5.5" fill="#fff" stroke="#333" stroke-width="1"/></svg>
<span class="t" style="left:103.5px;top:266.09px;height:14px;line-height:14px;font-size:11px;letter-spacing:-0.29px;">Consignee</span>
<span class="t" style="left:173.5px;top:266.09px;height:14px;line-height:14px;font-size:11px;letter-spacing:-0.02px;">Override</span>
<span class="t d" style="left:250px;top:245.19px;height:14px;line-height:14px;font-size:11px;letter-spacing:-0.25px;">Actual Trip Miles</span>
<div class="in" style="left:250px;top:261px;width:50px;height:21px;"></div>
<div class="in" style="left:80px;top:288px;width:150px;height:21px;"></div>
<span class="t" style="left:83.5px;top:291.69px;height:14px;line-height:14px;font-size:11px;letter-spacing:-0.64px;">CANADIAN DOLLARS</span>
<div class="btn" style="left:211px;top:290px;width:17px;height:17px;"></div>
<svg style="left:215px;top:296.5px;" width="9" height="6" viewBox="0 0 9 6"><path d="M0.5 0.8L4.5 4.8L8.5 0.8" stroke="#404040" stroke-width="1.1" fill="none"/></svg>
<div class="grp" style="left:330px;top:78px;width:209px;height:172px;"></div>
<span class="t lbl" style="left:335.5px;top:72.19px;height:14px;line-height:14px;font-size:11px;letter-spacing:-0.29px;">Ca<u>l</u>ler</span>
<div class="btn" style="left:335px;top:89px;width:15px;height:20px;"></div>
<span class="t" style="left:334.3px;top:92.19px;height:14px;line-height:14px;font-size:11px;width:14.4px;text-align:center;letter-spacing:-0.73px;">F</span>
<div class="in" style="left:353px;top:88px;width:136px;height:21px;"></div>
<span class="t" style="left:355.5px;top:90.89px;height:14px;line-height:14px;font-size:11px;letter-spacing:-0.12px;">00240</span>
<div class="btn" style="left:493px;top:89px;width:21px;height:20px;"></div>
<svg style="left:496.3px;top:91px;" width="14" height="16"><use href="#i-cust"/></svg>
<div class="btn" style="left:519px;top:89px;width:15px;height:20px;"></div>
<span class="t" style="left:518px;top:92.19px;height:14px;line-height:14px;font-size:11px;width:14.7px;text-align:center;letter-spacing:-1.34px;">P</span>
<div style="left:338px;top:118px;width:196px;height:80px;background:#fff"></div>
<span class="t " style="left:337.8px;top:117.89px;height:14px;line-height:14px;font-size:11px;letter-spacing:-0.56px;">S BOUDRIAS INC</span>
<span class="t " style="left:337.8px;top:133.89px;height:14px;line-height:14px;font-size:11px;letter-spacing:-0.64px;">29 RUE SAULNIER</span>
<span class="t g" style="left:338.8px;top:149.89px;height:14px;line-height:14px;font-size:11px;">&lt;Caller Address 2&gt;</span>
<span class="t " style="left:337.8px;top:165.89px;height:14px;line-height:14px;font-size:11px;letter-spacing:-0.85px;">LAVAL</span>
<span class="t " style="left:482.3px;top:165.89px;height:14px;line-height:14px;font-size:11px;letter-spacing:-0.75px;">QC</span>
<span class="t " style="left:337.8px;top:181.89px;height:14px;line-height:14px;font-size:11px;letter-spacing:-0.55px;">H7M 1S7</span>
<span class="t " style="left:482.3px;top:181.89px;height:14px;line-height:14px;font-size:11px;letter-spacing:-0.64px;">CA</span>
<svg style="left:517px;top:184.2px;" width="13" height="13"><use href="#i-look"/></svg>
<div class="btn" style="left:338px;top:202px;width:67px;height:21px;"></div>
<span class="t" style="left:341.5px;top:205.99px;height:14px;line-height:14px;font-size:11px;letter-spacing:-0.36px;">Phone</span>
<svg style="left:391.8px;top:209.7px;" width="9" height="6" viewBox="0 0 9 6"><path d="M0.6 0.8L4.5 4.7L8.4 0.8" stroke="#404040" stroke-width="1.1" fill="none"/></svg>
<div class="in" style="left:405px;top:202px;width:83px;height:21px;"></div>
<span class="t" style="left:407.5px;top:204.69px;height:14px;line-height:14px;font-size:11px;letter-spacing:-0.04px;">450-663-4245</span>
<span class="t" style="left:489px;top:207.19px;height:14px;line-height:14px;font-size:11px;letter-spacing:0.50px;">x</span>
<div class="in" style="left:496px;top:202px;width:35px;height:21px;"></div>
<div class="btn" style="left:338px;top:226px;width:67px;height:21px;"></div>
<span class="t" style="left:341.5px;top:229.99px;height:14px;line-height:14px;font-size:11px;">Contact</span>
<svg style="left:391.8px;top:233.7px;" width="9" height="6" viewBox="0 0 9 6"><path d="M0.6 0.8L4.5 4.7L8.4 0.8" stroke="#404040" stroke-width="1.1" fill="none"/></svg>
<div class="in" style="left:405px;top:226px;width:110px;height:21px;"></div>
<div class="btn" style="left:519px;top:226px;width:15px;height:20px;"></div>
<span class="t" style="left:518.2px;top:229.19px;height:14px;line-height:14px;font-size:11px;width:14.8px;text-align:center;letter-spacing:-0.95px;">C</span>
<div class="grp" style="left:591px;top:78px;width:212px;height:230px;"></div>
<span class="t lbl" style="left:597px;top:72.19px;height:14px;line-height:14px;font-size:11px;letter-spacing:-0.27px;"><u>S</u>hipper</span>
<div class="btn" style="left:596px;top:89px;width:15px;height:20px;"></div>
<span class="t" style="left:595.3px;top:92.19px;height:14px;line-height:14px;font-size:11px;width:14.4px;text-align:center;letter-spacing:-0.73px;">F</span>
<div class="in" style="left:614px;top:88px;width:139px;height:21px;"></div>
<span class="t" style="left:616.7px;top:90.89px;height:14px;line-height:14px;font-size:11px;letter-spacing:-0.12px;">07464</span>
<div class="btn" style="left:757px;top:89px;width:21px;height:20px;"></div>
<svg style="left:760.3px;top:91px;" width="14" height="16"><use href="#i-cust"/></svg>
<div class="btn" style="left:783px;top:89px;width:15px;height:20px;"></div>
<span class="t" style="left:782px;top:92.19px;height:14px;line-height:14px;font-size:11px;width:14.7px;text-align:center;letter-spacing:-1.34px;">P</span>
<div style="left:599px;top:118px;width:196px;height:80px;background:#fff"></div>
<span class="t " style="left:598.8px;top:117.89px;height:14px;line-height:14px;font-size:11px;letter-spacing:-0.75px;">PRIDE GROUP SIMCOE</span>
<span class="t " style="left:598.8px;top:133.89px;height:14px;line-height:14px;font-size:11px;letter-spacing:-0.69px;">211 ELIZABETH STREET</span>
<span class="t g" style="left:599.8px;top:149.89px;height:14px;line-height:14px;font-size:11px;letter-spacing:-0.02px;">&lt;Shipper Address 2&gt;</span>
<span class="t " style="left:598.8px;top:165.89px;height:14px;line-height:14px;font-size:11px;letter-spacing:-0.73px;">SIMCOE</span>
<span class="t " style="left:743.3px;top:165.89px;height:14px;line-height:14px;font-size:11px;letter-spacing:-0.75px;">ON</span>
<span class="t " style="left:598.8px;top:181.89px;height:14px;line-height:14px;font-size:11px;letter-spacing:-0.58px;">N3Y 4K1</span>
<span class="t " style="left:743.3px;top:181.89px;height:14px;line-height:14px;font-size:11px;letter-spacing:-0.64px;">CA</span>
<svg style="left:778.3px;top:184.2px;" width="13" height="13"><use href="#i-look"/></svg>
<div class="btn" style="left:599px;top:202px;width:67px;height:21px;"></div>
<span class="t" style="left:602.7px;top:205.99px;height:14px;line-height:14px;font-size:11px;letter-spacing:-0.36px;">Phone</span>
<svg style="left:653px;top:209.7px;" width="9" height="6" viewBox="0 0 9 6"><path d="M0.6 0.8L4.5 4.7L8.4 0.8" stroke="#404040" stroke-width="1.1" fill="none"/></svg>
<div class="in" style="left:666px;top:202px;width:83px;height:21px;"></div>
<span class="t" style="left:749.7px;top:207.19px;height:14px;line-height:14px;font-size:11px;letter-spacing:0.50px;">x</span>
<div class="in" style="left:757px;top:202px;width:35px;height:21px;"></div>
<div class="btn" style="left:599px;top:226px;width:67px;height:21px;"></div>
<span class="t" style="left:602.7px;top:229.99px;height:14px;line-height:14px;font-size:11px;">Contact</span>
<svg style="left:653px;top:233.7px;" width="9" height="6" viewBox="0 0 9 6"><path d="M0.6 0.8L4.5 4.7L8.4 0.8" stroke="#404040" stroke-width="1.1" fill="none"/></svg>
<div class="in" style="left:666px;top:226px;width:110px;height:21px;"></div>
<div class="btn" style="left:780px;top:226px;width:15px;height:20px;"></div>
<span class="t" style="left:779.4px;top:229.19px;height:14px;line-height:14px;font-size:11px;width:14.8px;text-align:center;letter-spacing:-0.95px;">C</span>
<div class="grp" style="left:850px;top:78px;width:209px;height:230px;"></div>
<span class="t lbl" style="left:855.5px;top:72.19px;height:14px;line-height:14px;font-size:11px;letter-spacing:-0.29px;">Consign<u>e</u>e</span>
<div class="btn" style="left:855px;top:89px;width:15px;height:20px;"></div>
<span class="t" style="left:854.3px;top:92.19px;height:14px;line-height:14px;font-size:11px;width:14.4px;text-align:center;letter-spacing:-0.73px;">F</span>
<div class="in" style="left:873px;top:88px;width:136px;height:21px;"></div>
<div class="btn" style="left:1013px;top:89px;width:21px;height:20px;"></div>
<svg style="left:1016.3px;top:91px;" width="14" height="16"><use href="#i-cust"/></svg>
<div class="btn" style="left:1039px;top:89px;width:15px;height:20px;"></div>
<span class="t" style="left:1038px;top:92.19px;height:14px;line-height:14px;font-size:11px;width:14.7px;text-align:center;letter-spacing:-1.34px;">P</span>
<div style="left:858px;top:118px;width:196px;height:80px;background:#fff"></div>
<span class="t g" style="left:858.8px;top:133.89px;height:14px;line-height:14px;font-size:11px;letter-spacing:-0.05px;">&lt;Consignee Address 1&gt;</span>
<span class="t g" style="left:858.8px;top:149.89px;height:14px;line-height:14px;font-size:11px;letter-spacing:-0.05px;">&lt;Consignee Address 2&gt;</span>
<span class="t g" style="left:858.8px;top:165.89px;height:14px;line-height:14px;font-size:11px;letter-spacing:0.03px;">&lt;Consignee City&gt;</span>
<div style="left:1003px;top:166px;width:51px;height:15px;overflow:hidden"><span class="t g" style="left:0;top:0;height:14px;line-height:14px">&lt;Consignee Province&gt;</span></div>
<span class="t g" style="left:858.8px;top:181.89px;height:14px;line-height:14px;font-size:11px;letter-spacing:-0.11px;">&lt;Consignee Postal Code&gt;</span>
<svg style="left:1037px;top:184.2px;" width="13" height="13"><use href="#i-look"/></svg>
<div class="btn" style="left:858px;top:202px;width:67px;height:21px;"></div>
<span class="t" style="left:861.5px;top:205.99px;height:14px;line-height:14px;font-size:11px;letter-spacing:-0.36px;">Phone</span>
<svg style="left:911.8px;top:209.7px;" width="9" height="6" viewBox="0 0 9 6"><path d="M0.6 0.8L4.5 4.7L8.4 0.8" stroke="#404040" stroke-width="1.1" fill="none"/></svg>
<div class="in" style="left:925px;top:202px;width:83px;height:21px;"></div>
<span class="t" style="left:1009px;top:207.19px;height:14px;line-height:14px;font-size:11px;letter-spacing:0.50px;">x</span>
<div class="in" style="left:1016px;top:202px;width:35px;height:21px;"></div>
<div class="btn" style="left:858px;top:226px;width:67px;height:21px;"></div>
<span class="t" style="left:861.5px;top:229.99px;height:14px;line-height:14px;font-size:11px;">Contact</span>
<svg style="left:911.8px;top:233.7px;" width="9" height="6" viewBox="0 0 9 6"><path d="M0.6 0.8L4.5 4.7L8.4 0.8" stroke="#404040" stroke-width="1.1" fill="none"/></svg>
<div class="in" style="left:925px;top:226px;width:110px;height:21px;"></div>
<div class="btn" style="left:1039px;top:226px;width:15px;height:20px;"></div>
<span class="t" style="left:1038.2px;top:229.19px;height:14px;line-height:14px;font-size:11px;width:14.8px;text-align:center;letter-spacing:-0.95px;">C</span>
<div style="left:858px;top:118.5px;width:1px;height:12.5px;background:#000"></div>
<div class="grp" style="left:333px;top:254px;width:209px;height:54px;"></div>
<div class="in" style="left:336px;top:260px;width:52px;height:21px;"></div>
<span class="t" style="right:1536px;top:263.19px;height:14px;line-height:14px;font-size:11px;text-align:right;letter-spacing:-0.12px;">0</span>
<div class="in" style="left:390px;top:260px;width:48px;height:21px;"></div>
<span class="t" style="left:393px;top:263.19px;height:14px;line-height:14px;font-size:11px;letter-spacing:-0.12px;">MI</span>
<svg style="left:419px;top:264.5px;" width="13" height="13"><use href="#i-look"/></svg>
<div style="left:443px;top:264px;width:13px;height:13px;background:#fff;border:1px solid #333"></div>
<span class="t" style="left:458.3px;top:263.89px;height:14px;line-height:14px;font-size:11px;letter-spacing:-0.47px;">Man</span>
<div class="btn" style="left:487px;top:261px;width:50px;height:19px;"></div>
<span class="t" style="left:487px;top:263.89px;height:14px;line-height:14px;font-size:11px;width:49.7px;text-align:center;letter-spacing:-0.36px;">Mileage</span>
<span class="t" style="left:356.3px;top:288.89px;height:14px;line-height:14px;font-size:11px;letter-spacing:-0.39px;">Decl. Value</span>
<div class="in" style="left:413px;top:285px;width:125px;height:21px;"></div>
<span class="t" style="left:592.5px;top:247.89px;height:14px;line-height:14px;font-size:11px;letter-spacing:-0.56px;">Pick Up</span>
<div style="left:637px;top:249.3px;width:13px;height:13px;background:#fff;border:1px solid #333"></div>
<span class="t" style="left:652.8px;top:249.39px;height:14px;line-height:14px;font-size:11px;letter-spacing:-0.11px;">Appt Req</span>
<div style="left:703px;top:249.3px;width:13px;height:13px;background:#fff;border:1px solid #333"></div>
<span class="t" style="left:718.3px;top:249.39px;height:14px;line-height:14px;font-size:11px;letter-spacing:-0.38px;">Made</span>
<div style="left:751.2px;top:249.3px;width:13px;height:13px;background:#fff;border:1px solid #333"></div>
<span class="t" style="left:766.3px;top:249.39px;height:14px;line-height:14px;font-size:11px;letter-spacing:-0.21px;">Drop</span>
<div class="in" style="left:591px;top:264px;width:104px;height:21px;"></div>
<span class="t" style="left:594.2px;top:266.69px;height:14px;line-height:14px;font-size:11px;letter-spacing:0.12px;">3/12/2025</span>
<svg style="left:675px;top:268px;" width="15" height="14"><use href="#i-cal"/></svg>
<div class="in" style="left:694px;top:264px;width:104px;height:21px;"></div>
<span class="t" style="left:697.2px;top:266.69px;height:14px;line-height:14px;font-size:11px;letter-spacing:0.12px;">3/12/2025</span>
<svg style="left:778px;top:268px;" width="15" height="14"><use href="#i-cal"/></svg>
<span class="t" style="left:600.3px;top:289.69px;height:14px;line-height:14px;font-size:11px;letter-spacing:-0.04px;">Start Zone</span>
<div class="in" style="left:655px;top:286px;width:121px;height:21px;"></div>
<span class="t" style="left:657.8px;top:288.69px;height:14px;line-height:14px;font-size:11px;letter-spacing:-0.71px;">YARD-WALS</span>
<svg style="left:757.3px;top:291px;" width="13" height="13"><use href="#i-look"/></svg>
<span class="t" style="left:852.5px;top:247.89px;height:14px;line-height:14px;font-size:11px;letter-spacing:-0.18px;">Deliver</span>
<div style="left:897px;top:249.3px;width:13px;height:13px;background:#fff;border:1px solid #333"></div>
<span class="t" style="left:912.8px;top:249.39px;height:14px;line-height:14px;font-size:11px;letter-spacing:-0.11px;">Appt Req</span>
<div style="left:963px;top:249.3px;width:13px;height:13px;background:#fff;border:1px solid #333"></div>
<span class="t" style="left:978.3px;top:249.39px;height:14px;line-height:14px;font-size:11px;letter-spacing:-0.38px;">Made</span>
<div style="left:1011.2px;top:249.3px;width:13px;height:13px;background:#fff;border:1px solid #333"></div>
<span class="t" style="left:1026.3px;top:249.39px;height:14px;line-height:14px;font-size:11px;letter-spacing:-0.21px;">Drop</span>
<div class="in" style="left:851px;top:264px;width:104px;height:21px;"></div>
<span class="t" style="left:854.2px;top:266.69px;height:14px;line-height:14px;font-size:11px;letter-spacing:0.12px;">3/12/2025</span>
<svg style="left:935px;top:268px;" width="15" height="14"><use href="#i-cal"/></svg>
<div class="in" style="left:954px;top:264px;width:104px;height:21px;"></div>
<span class="t" style="left:957.2px;top:266.69px;height:14px;line-height:14px;font-size:11px;letter-spacing:0.12px;">3/12/2025</span>
<svg style="left:1038px;top:268px;" width="15" height="14"><use href="#i-cal"/></svg>
<span class="t" style="left:865.3px;top:289.69px;height:14px;line-height:14px;font-size:11px;letter-spacing:-0.34px;">End Zone</span>
<div class="in" style="left:914px;top:286px;width:121px;height:21px;"></div>
<svg style="left:1016.5px;top:291px;" width="13" height="13"><use href="#i-look"/></svg>
<div class="grp" style="left:1075px;top:78px;width:275px;height:230px;"></div>
<span class="t lbl" style="left:1080.5px;top:72.19px;height:14px;line-height:14px;font-size:11px;letter-spacing:-0.13px;">Options</span>
<div class="btn" style="left:1076px;top:89px;width:111px;height:23px;"></div>
<svg style="left:1108.3px;top:93px;" width="15" height="16"><use href="#i-note"/></svg>
<span class="t" style="left:1127px;top:93.89px;height:14px;line-height:14px;font-size:11px;letter-spacing:-0.15px;">Notes</span>
<div class="btn" style="left:1076px;top:122px;width:111px;height:23px;"></div>
<svg style="left:1082.3px;top:126px;" width="15" height="16"><use href="#i-note"/></svg>
<span class="t" style="left:1101.2px;top:126.89px;height:14px;line-height:14px;font-size:11px;letter-spacing:-0.08px;">Ship Instructions</span>
<span class="t" style="left:1074.7px;top:148.89px;height:14px;line-height:14px;font-size:11px;letter-spacing:-0.14px;">Operations Code</span>
<div class="in" style="left:1075px;top:165px;width:103px;height:21px;"></div>
<span class="t" style="left:1077.5px;top:167.89px;height:14px;line-height:14px;font-size:11px;letter-spacing:-0.85px;">FTL</span>
<svg style="left:1159px;top:169.5px;" width="13" height="13"><use href="#i-look"/></svg>
<span class="t" style="left:1074.7px;top:189.99px;height:14px;line-height:14px;font-size:11px;letter-spacing:-0.20px;">Requested Equipment</span>
<div class="in" style="left:1075px;top:206px;width:103px;height:21px;"></div>
<svg style="left:1159px;top:210.5px;" width="13" height="13"><use href="#i-look"/></svg>
<span class="t" style="left:1074.7px;top:229.69px;height:14px;line-height:14px;font-size:11px;letter-spacing:-0.26px;">CA Brokerage</span>
<div style="left:1075px;top:246px;width:113px;height:21px;background:#fff;border:1px solid #333"></div>
<svg style="left:1169px;top:252.55px;" width="13" height="8" viewBox="0 0 13 8"><path d="M1 1L6.5 6.3L12 1" stroke="#333" stroke-width="1.8" fill="none"/></svg>
<span class="t" style="left:1074.7px;top:266.69px;height:14px;line-height:14px;font-size:11px;letter-spacing:-0.34px;">US Brokerage</span>
<div style="left:1075px;top:283px;width:113px;height:21px;background:#fff;border:1px solid #333"></div>
<svg style="left:1169px;top:289.55px;" width="13" height="8" viewBox="0 0 13 8"><path d="M1 1L6.5 6.3L12 1" stroke="#333" stroke-width="1.8" fill="none"/></svg>
<span class="t" style="left:1204.5px;top:84.19px;height:14px;line-height:14px;font-size:11px;letter-spacing:-0.23px;">Ser<u>v</u>ice Level</span>
<div style="left:1205px;top:100px;width:103px;height:21px;background:#fff;border:1px solid #333"></div>
<div style="left:1208px;top:103px;width:55px;height:13px;background:#0078d7"></div>
<span class="t w" style="left:1208px;top:103.19px;height:14px;line-height:14px;font-size:11px;letter-spacing:-0.81px;">STANDARD</span>
<svg style="left:1293.5px;top:107.5px;" width="10" height="6" viewBox="0 0 10 6"><path d="M0.5 0.6L5 5L9.5 0.6" stroke="#333" stroke-width="1.1" fill="none"/></svg>
<span class="t d" style="left:1205.8px;top:131.99px;height:14px;line-height:14px;font-size:11px;letter-spacing:-0.26px;">Wait Time Reviewed?</span>
<div style="left:1206px;top:148px;width:117px;height:21px;background:#fff;border:1px solid #d4d4d4"></div>
<span class="t d" style="left:1196.7px;top:177.19px;height:14px;line-height:14px;font-size:11px;letter-spacing:-0.33px;">Billing Pendency</span>
<div style="left:1197px;top:193px;width:150px;height:21px;background:#fff;border:1px solid #d4d4d4"></div>
<div class="btn" style="left:1355px;top:73px;width:112px;height:23px;"></div>
<svg style="left:1386px;top:76.5px;" width="15" height="16"><use href="#i-binoc"/></svg>
<span class="t" style="left:1404.2px;top:78.39px;height:14px;line-height:14px;font-size:11px;letter-spacing:-0.23px;"><u>F</u>ind...</span>
<div class="btn" style="left:1355px;top:97px;width:112px;height:23px;"></div>
<svg style="left:1376px;top:100.5px;" width="15" height="16"><use href="#i-findq"/></svg>
<span class="t" style="left:1394px;top:102.39px;height:14px;line-height:14px;font-size:11px;letter-spacing:-0.14px;">Fi<u>n</u>d Quote</span>
<div class="btn" style="left:1355px;top:121px;width:112px;height:23px;"></div>
<svg style="left:1389.5px;top:124.5px;" width="15" height="16"><use href="#i-move"/></svg>
<span class="t" style="left:1407px;top:126.39px;height:14px;line-height:14px;font-size:11px;letter-spacing:-0.23px;">Move</span>
<div class="btn" style="left:1355px;top:145px;width:112px;height:23px;"></div>
<svg style="left:1389.5px;top:148.5px;" width="15" height="16"><use href="#i-copy"/></svg>
<span class="t" style="left:1408.3px;top:150.39px;height:14px;line-height:14px;font-size:11px;letter-spacing:-0.17px;">Cop<u>y</u></span>
<div class="btn" style="left:1355px;top:169px;width:112px;height:23px;"></div>
<svg style="left:1384px;top:172.5px;" width="15" height="16"><use href="#i-stop"/></svg>
<span class="t" style="left:1402.3px;top:174.39px;height:14px;line-height:14px;font-size:11px;letter-spacing:-0.31px;"><u>X</u>-Stops</span>
<div class="btn" style="left:1355px;top:193px;width:112px;height:23px;"></div>
<svg style="left:1387.5px;top:196.5px;" width="15" height="16"><use href="#i-quote"/></svg>
<span class="t" style="left:1405.5px;top:198.39px;height:14px;line-height:14px;font-size:11px;"><u>Q</u>uote</span>
<div class="btn" style="left:1355px;top:217px;width:112px;height:23px;"></div>
<svg style="left:1392px;top:220.5px;" width="15" height="16"><use href="#i-post"/></svg>
<span class="t" style="left:1410px;top:222.39px;height:14px;line-height:14px;font-size:11px;letter-spacing:-0.25px;"><u>P</u>ost</span>
<div class="btn" style="left:1355px;top:241px;width:112px;height:43px;"></div>
<span class="t" style="left:1355.3px;top:249.69px;height:14px;line-height:14px;font-size:11px;width:111.4px;text-align:center;letter-spacing:-0.52px;">SITE1</span>
<span class="t" style="left:1355.3px;top:262.69px;height:14px;line-height:14px;font-size:11px;width:111.4px;text-align:center;letter-spacing:-0.26px;">FTL Freight</span>
<div class="btn" style="left:1355px;top:285px;width:112px;height:23px;"></div>
<svg style="left:1390.5px;top:288.5px;" width="15" height="16"><use href="#i-printer"/></svg>
<span class="t" style="left:1409px;top:290.39px;height:14px;line-height:14px;font-size:11px;letter-spacing:-0.12px;">Print</span>
<div style="left:1480px;top:73px;width:375px;height:177px;background:#fff;border:1px solid #a0a0a0"></div>
<div style="left:1493px;top:75px;width:1px;height:39px;background:#e6e6e6"></div>
<div style="left:1594px;top:75px;width:1px;height:39px;background:#e6e6e6"></div>
<div style="left:1631px;top:75px;width:1px;height:39px;background:#e6e6e6"></div>
<div style="left:1699px;top:75px;width:1px;height:39px;background:#e6e6e6"></div>
<div style="left:1733px;top:75px;width:1px;height:39px;background:#e6e6e6"></div>
<div style="left:1796px;top:75px;width:1px;height:39px;background:#e6e6e6"></div>
<div style="left:1482px;top:94px;width:372px;height:1px;background:#e6e6e6"></div>
<div style="left:1482px;top:113px;width:372px;height:1px;background:#e6e6e6"></div>
<span class="s" style="left:1496.5px;top:76.54px;height:16px;line-height:16px;font-size:12px;letter-spacing:-0.22px;">Trace Number</span>
<span class="s" style="left:1597px;top:76.54px;height:16px;line-height:16px;font-size:12px;letter-spacing:-0.42px;">Type</span>
<span class="s" style="left:1634px;top:76.54px;height:16px;line-height:16px;font-size:12px;">Description</span>
<span class="s" style="left:1702px;top:76.54px;height:16px;line-height:16px;font-size:12px;letter-spacing:-0.47px;">Ref.Q</span>
<span class="s" style="left:1736.5px;top:76.54px;height:16px;line-height:16px;font-size:12px;letter-spacing:-0.40px;">Created By</span>
<div style="left:1797px;top:76px;width:54px;height:17px;overflow:hidden"><span class="s" style="left:2px;top:0.5px;height:16px;line-height:16px">Modified By</span></div>
<svg style="left:1485px;top:99px;" width="7" height="12" viewBox="0 0 7 12"><path d="M0.5 0.5V11.5L6.5 6Z" fill="#000"/></svg>
<div style="left:1482px;top:232px;width:372px;height:17px;background:#f0f0f0"></div>
<div style="left:1499px;top:232px;width:17px;height:16px;background:#cdcdcd"></div>
<svg style="left:1486px;top:234.5px;" width="8" height="10" viewBox="0 0 8 10"><path d="M6 1L2 5L6 9" stroke="#404040" stroke-width="1.7" fill="none"/></svg>
<svg style="left:1841px;top:234.5px;" width="8" height="10" viewBox="0 0 8 10"><path d="M2 1L6 5L2 9" stroke="#404040" stroke-width="1.7" fill="none"/></svg>
<span class="t" style="left:1498.3px;top:266.69px;height:14px;line-height:14px;font-size:11px;letter-spacing:-0.39px;">EDI SID</span>
<div class="in" style="left:1539px;top:263px;width:124px;height:21px;"></div>
<div style="left:1480px;top:287px;width:22px;height:20px;background:#cccccc;border:1px solid #bfbfbf"></div>
<svg style="left:1483px;top:289px;" width="16" height="16"><use href="#i-first"/></svg>
<div style="left:1503px;top:287px;width:22px;height:20px;background:#cccccc;border:1px solid #bfbfbf"></div>
<svg style="left:1506px;top:289px;" width="16" height="16"><use href="#i-prev"/></svg>
<div style="left:1526px;top:287px;width:22px;height:20px;background:#cccccc;border:1px solid #bfbfbf"></div>
<svg style="left:1529px;top:289px;" width="16" height="16"><use href="#i-next"/></svg>
<div style="left:1549px;top:287px;width:22px;height:20px;background:#cccccc;border:1px solid #bfbfbf"></div>
<svg style="left:1552px;top:289px;" width="16" height="16"><use href="#i-last"/></svg>
<div style="left:1572px;top:287px;width:22px;height:20px;background:#e1e1e1;border:1px solid #adadad"></div>
<svg style="left:1575px;top:289px;" width="16" height="16"><use href="#i-plusb"/></svg>
<div style="left:1595px;top:287px;width:22px;height:20px;background:#cccccc;border:1px solid #bfbfbf"></div>
<svg style="left:1598px;top:289px;" width="16" height="16"><use href="#i-minus"/></svg>
<div style="left:1618px;top:287px;width:22px;height:20px;background:#cccccc;border:1px solid #bfbfbf"></div>
<svg style="left:1621px;top:289px;" width="16" height="16"><use href="#i-up"/></svg>
<div style="left:1641px;top:287px;width:22px;height:20px;background:#cccccc;border:1px solid #bfbfbf"></div>
<svg style="left:1644px;top:289px;" width="16" height="16"><use href="#i-checkg"/></svg>
<div style="left:1664px;top:287px;width:22px;height:20px;background:#cccccc;border:1px solid #bfbfbf"></div>
<svg style="left:1667px;top:289px;" width="16" height="16"><use href="#i-xg"/></svg>
<div style="left:1687px;top:287px;width:22px;height:20px;background:#e1e1e1;border:1px solid #adadad"></div>
<svg style="left:1690px;top:289px;" width="16" height="16"><use href="#i-refreshb"/></svg>
<span class="t" style="left:1720px;top:291.19px;height:14px;line-height:14px;font-size:11px;letter-spacing:-0.12px;">Type</span>
<div class="in" style="left:1747px;top:287px;width:40px;height:21px;"></div>
<svg style="left:1768px;top:291px;" width="13" height="13"><use href="#i-look"/></svg>
<div style="left:1px;top:331px;width:1917px;height:669px;background:#fff;border:1px solid #d9d9d9;border-right-color:#ececec;border-bottom-color:#ececec"></div>
<div style="left:4px;top:335px;width:1912px;height:661px;background:#f0f0f0"></div>
<div style="left:2px;top:313px;width:55px;height:19px;background:#f0f0f0;border:1px solid #d9d9d9;border-bottom:none"></div>
<span class="t" style="left:7.5px;top:315.89px;height:14px;line-height:14px;font-size:11px;letter-spacing:-0.44px;">Summary</span>
<div style="left:103px;top:313px;width:46px;height:19px;background:#f0f0f0;border:1px solid #d9d9d9;border-bottom:none"></div>
<span class="t" style="left:109.2px;top:315.89px;height:14px;line-height:14px;font-size:11px;letter-spacing:0.12px;">Trace#</span>
<div style="left:148px;top:313px;width:44px;height:19px;background:#f0f0f0;border:1px solid #d9d9d9;border-bottom:none"></div>
<span class="t" style="left:156.3px;top:315.89px;height:14px;line-height:14px;font-size:11px;letter-spacing:-0.03px;">Status</span>
<div style="left:191px;top:313px;width:56px;height:19px;background:#f0f0f0;border:1px solid #d9d9d9;border-bottom:none"></div>
<span class="t" style="left:199.5px;top:315.89px;height:14px;line-height:14px;font-size:11px;letter-spacing:-0.05px;">Contacts</span>
<div style="left:246px;top:313px;width:48px;height:19px;background:#f0f0f0;border:1px solid #d9d9d9;border-bottom:none"></div>
<span class="t" style="left:254.5px;top:315.89px;height:14px;line-height:14px;font-size:11px;letter-spacing:-0.08px;">Quotes</span>
<div style="left:293px;top:313px;width:43px;height:19px;background:#f0f0f0;border:1px solid #d9d9d9;border-bottom:none"></div>
<span class="t" style="left:309.2px;top:315.89px;height:14px;line-height:14px;font-size:11px;letter-spacing:0.18px;">I/P</span>
<div style="left:335px;top:313px;width:43px;height:19px;background:#f0f0f0;border:1px solid #d9d9d9;border-bottom:none"></div>
<span class="t" style="left:345px;top:315.89px;height:14px;line-height:14px;font-size:11px;letter-spacing:-0.48px;">Billing</span>
<div style="left:377px;top:313px;width:43px;height:19px;background:#f0f0f0;border:1px solid #d9d9d9;border-bottom:none"></div>
<span class="t" style="left:383.5px;top:315.89px;height:14px;line-height:14px;font-size:11px;letter-spacing:-0.82px;">COD</span>
<div style="left:419px;top:313px;width:43px;height:19px;background:#f0f0f0;border:1px solid #d9d9d9;border-bottom:none"></div>
<span class="t" style="left:425.5px;top:315.89px;height:14px;line-height:14px;font-size:11px;letter-spacing:-1.34px;">GL</span>
<div style="left:461px;top:313px;width:57px;height:19px;background:#f0f0f0;border:1px solid #d9d9d9;border-bottom:none"></div>
<span class="t" style="left:469.7px;top:315.89px;height:14px;line-height:14px;font-size:11px;letter-spacing:-0.38px;">Acc Chgs</span>
<div style="left:517px;top:313px;width:54px;height:19px;background:#f0f0f0;border:1px solid #d9d9d9;border-bottom:none"></div>
<span class="t" style="left:523.3px;top:315.89px;height:14px;line-height:14px;font-size:11px;letter-spacing:-0.22px;">Dispatch</span>
<div style="left:570px;top:313px;width:65px;height:19px;background:#f0f0f0;border:1px solid #d9d9d9;border-bottom:none"></div>
<span class="t" style="left:578.3px;top:315.89px;height:14px;line-height:14px;font-size:11px;">InterModal</span>
<div style="left:634px;top:313px;width:75px;height:19px;background:#f0f0f0;border:1px solid #d9d9d9;border-bottom:none"></div>
<span class="t" style="left:642px;top:315.89px;height:14px;line-height:14px;font-size:11px;letter-spacing:-0.35px;">Dang. Goods</span>
<div style="left:708px;top:313px;width:76px;height:19px;background:#f0f0f0;border:1px solid #d9d9d9;border-bottom:none"></div>
<span class="t" style="left:716.3px;top:315.89px;height:14px;line-height:14px;font-size:11px;letter-spacing:-0.22px;">Custom Def's</span>
<div style="left:783px;top:313px;width:66px;height:19px;background:#f0f0f0;border:1px solid #d9d9d9;border-bottom:none"></div>
<span class="t" style="left:791.3px;top:315.89px;height:14px;line-height:14px;font-size:11px;letter-spacing:-0.63px;">OS&amp;D/POD</span>
<div style="left:848px;top:313px;width:59px;height:19px;background:#f0f0f0;border:1px solid #d9d9d9;border-bottom:none"></div>
<span class="t" style="left:854.7px;top:315.89px;height:14px;line-height:14px;font-size:11px;letter-spacing:-0.32px;">Trip Res's</span>
<div style="left:906px;top:313px;width:61px;height:19px;background:#f0f0f0;border:1px solid #d9d9d9;border-bottom:none"></div>
<span class="t" style="left:914.3px;top:315.89px;height:14px;line-height:14px;font-size:11px;letter-spacing:-0.34px;">Check List</span>
<div style="left:966px;top:313px;width:54px;height:19px;background:#f0f0f0;border:1px solid #d9d9d9;border-bottom:none"></div>
<span class="t" style="left:972.3px;top:315.89px;height:14px;line-height:14px;font-size:11px;letter-spacing:-0.34px;">Customs</span>
<div style="left:1019px;top:313px;width:62px;height:19px;background:#f0f0f0;border:1px solid #d9d9d9;border-bottom:none"></div>
<span class="t" style="left:1025.3px;top:315.89px;height:14px;line-height:14px;font-size:11px;letter-spacing:-0.20px;">User Def's</span>
<div style="left:1080px;top:313px;width:41px;height:19px;background:#f0f0f0;border:1px solid #d9d9d9;border-bottom:none"></div>
<span class="t" style="left:1086.3px;top:315.89px;height:14px;line-height:14px;font-size:11px;letter-spacing:-0.99px;">LTL</span>
<div style="left:56px;top:311px;width:48px;height:22px;background:#fff;border:1px solid #d9d9d9;border-bottom:none"></div>
<span class="t" style="left:67.2px;top:314.19px;height:14px;line-height:14px;font-size:11px;letter-spacing:-0.23px;">Details</span>
<div style="left:4px;top:341px;width:1912px;height:654px;border:1px solid #dcdcdc"></div>
<div style="left:6px;top:989px;width:1908px;height:1px;background:#a0a0a0"></div>
<span class="t lbl" style="left:9.3px;top:334.69px;height:14px;line-height:14px;font-size:11px;letter-spacing:-0.26px;">Load Details</span>
<div style="left:1913px;top:350px;width:1px;height:640px;background:#a0a0a0"></div>
<div style="left:7px;top:351px;width:1902px;height:559px;background:#fff;border:1px solid #a0a0a0"></div>
<div style="left:20px;top:353px;width:1px;height:38px;background:#e6e6e6"></div>
<div style="left:95px;top:353px;width:1px;height:38px;background:#e6e6e6"></div>
<div style="left:289px;top:353px;width:1px;height:38px;background:#e6e6e6"></div>
<div style="left:364px;top:353px;width:1px;height:38px;background:#e6e6e6"></div>
<div style="left:418px;top:353px;width:1px;height:38px;background:#e6e6e6"></div>
<div style="left:514px;top:353px;width:1px;height:38px;background:#e6e6e6"></div>
<div style="left:591px;top:353px;width:1px;height:38px;background:#e6e6e6"></div>
<div style="left:699px;top:353px;width:1px;height:38px;background:#e6e6e6"></div>
<div style="left:774px;top:353px;width:1px;height:38px;background:#e6e6e6"></div>
<div style="left:834px;top:353px;width:1px;height:38px;background:#e6e6e6"></div>
<div style="left:909px;top:353px;width:1px;height:38px;background:#e6e6e6"></div>
<div style="left:974px;top:353px;width:1px;height:38px;background:#e6e6e6"></div>
<div style="left:1042px;top:353px;width:1px;height:38px;background:#e6e6e6"></div>
<div style="left:1111px;top:353px;width:1px;height:38px;background:#e6e6e6"></div>
<div style="left:1186px;top:353px;width:1px;height:38px;background:#e6e6e6"></div>
<div style="left:1228px;top:353px;width:1px;height:38px;background:#e6e6e6"></div>
<div style="left:1303px;top:353px;width:1px;height:38px;background:#e6e6e6"></div>
<div style="left:1378px;top:353px;width:1px;height:38px;background:#e6e6e6"></div>
<div style="left:1432px;top:353px;width:1px;height:38px;background:#e6e6e6"></div>
<div style="left:1493px;top:353px;width:1px;height:38px;background:#e6e6e6"></div>
<div style="left:1568px;top:353px;width:1px;height:38px;background:#e6e6e6"></div>
<div style="left:1648px;top:353px;width:1px;height:38px;background:#e6e6e6"></div>
<div style="left:1716px;top:353px;width:1px;height:38px;background:#e6e6e6"></div>
<div style="left:1830px;top:353px;width:1px;height:38px;background:#e6e6e6"></div>
<div style="left:1905px;top:353px;width:1px;height:38px;background:#e6e6e6"></div>
<div style="left:8px;top:371px;width:1898px;height:1px;background:#e6e6e6"></div>
<div style="left:8px;top:390px;width:1898px;height:1px;background:#e6e6e6"></div>
<span class="h" style="left:23.3px;top:354.54px;height:16px;line-height:16px;font-size:12px;letter-spacing:0.17px;">Commodity</span>
<span class="h" style="left:98.3px;top:354.54px;height:16px;line-height:16px;font-size:12px;letter-spacing:0.12px;">Description</span>
<span class="h" style="left:292.3px;top:354.54px;height:16px;line-height:16px;font-size:12px;letter-spacing:-0.30px;">Pieces</span>
<span class="h" style="left:367.1px;top:354.54px;height:16px;line-height:16px;font-size:12px;letter-spacing:-0.09px;">Pcs Units</span>
<span class="h" style="left:421.5px;top:354.54px;height:16px;line-height:16px;font-size:12px;letter-spacing:0.16px;">Temp Controlled</span>
<span class="h" style="left:517.1px;top:354.54px;height:16px;line-height:16px;font-size:12px;letter-spacing:0.22px;">Temperature</span>
<span class="h" style="left:594.5px;top:354.54px;height:16px;line-height:16px;font-size:12px;letter-spacing:0.20px;">Temperature Units</span>
<span class="h" style="left:702.1px;top:354.54px;height:16px;line-height:16px;font-size:12px;letter-spacing:0.23px;">Weight</span>
<span class="h" style="left:777.1px;top:354.54px;height:16px;line-height:16px;font-size:12px;letter-spacing:0.22px;">Wgt Units</span>
<span class="h" style="left:837.1px;top:354.54px;height:16px;line-height:16px;font-size:12px;letter-spacing:-0.08px;">Pallets</span>
<span class="h" style="left:912.3px;top:354.54px;height:16px;line-height:16px;font-size:12px;letter-spacing:0.07px;">Pallet Units</span>
<span class="h" style="left:977.2px;top:354.54px;height:16px;line-height:16px;font-size:12px;letter-spacing:0.09px;">UN Number</span>
<span class="h" style="left:1045.4px;top:354.54px;height:16px;line-height:16px;font-size:12px;letter-spacing:-0.05px;">Perishable</span>
<span class="h" style="left:1114px;top:354.54px;height:16px;line-height:16px;font-size:12px;letter-spacing:0.12px;">Item Pieces</span>
<span class="h" style="left:1188.8px;top:354.54px;height:16px;line-height:16px;font-size:12px;letter-spacing:0.43px;">Items</span>
<span class="h" style="left:1231.1px;top:354.54px;height:16px;line-height:16px;font-size:12px;letter-spacing:0.12px;">Sub Total</span>
<span class="h" style="left:1306.1px;top:354.54px;height:16px;line-height:16px;font-size:12px;letter-spacing:-0.08px;">Rate</span>
<span class="h" style="left:1381.1px;top:354.54px;height:16px;line-height:16px;font-size:12px;letter-spacing:-0.06px;">Rate Per</span>
<span class="h" style="left:1435.1px;top:354.54px;height:16px;line-height:16px;font-size:12px;letter-spacing:0.07px;">Rate Units</span>
<span class="h" style="left:1496.1px;top:354.54px;height:16px;line-height:16px;font-size:12px;letter-spacing:-0.05px;">Rated As</span>
<span class="h" style="left:1571.1px;top:354.54px;height:16px;line-height:16px;font-size:12px;letter-spacing:0.02px;">Created By</span>
<span class="h" style="left:1651.1px;top:354.54px;height:16px;line-height:16px;font-size:12px;letter-spacing:0.11px;">Modified By</span>
<span class="h" style="left:1719.3px;top:354.54px;height:16px;line-height:16px;font-size:12px;letter-spacing:0.13px;">Modified On</span>
<span class="h" style="left:1833.1px;top:354.54px;height:16px;line-height:16px;font-size:12px;letter-spacing:-0.19px;">Cube</span>
<svg style="left:12px;top:375px;" width="7" height="12" viewBox="0 0 7 12"><path d="M0.5 0.5V11.5L6.5 6Z" fill="#000"/></svg>
<div style="left:8px;top:892px;width:1900px;height:17px;background:#f0f0f0"></div>
<div style="left:26px;top:892px;width:17px;height:15px;background:#cdcdcd"></div>
<svg style="left:13px;top:894.5px;" width="8" height="10" viewBox="0 0 8 10"><path d="M6 1L2 5L6 9" stroke="#404040" stroke-width="1.7" fill="none"/></svg>
<svg style="left:1894px;top:894.5px;" width="8" height="10" viewBox="0 0 8 10"><path d="M2 1L6 5L2 9" stroke="#404040" stroke-width="1.7" fill="none"/></svg>
<div style="left:10px;top:941px;width:22px;height:20px;background:#cccccc;border:1px solid #bfbfbf"></div>
<svg style="left:13px;top:943px;" width="16" height="16"><use href="#i-first"/></svg>
<div style="left:33px;top:941px;width:22px;height:20px;background:#cccccc;border:1px solid #bfbfbf"></div>
<svg style="left:36px;top:943px;" width="16" height="16"><use href="#i-prev"/></svg>
<div style="left:56px;top:941px;width:22px;height:20px;background:#cccccc;border:1px solid #bfbfbf"></div>
<svg style="left:59px;top:943px;" width="16" height="16"><use href="#i-next"/></svg>
<div style="left:79px;top:941px;width:22px;height:20px;background:#cccccc;border:1px solid #bfbfbf"></div>
<svg style="left:82px;top:943px;" width="16" height="16"><use href="#i-last"/></svg>
<div style="left:102px;top:941px;width:22px;height:20px;background:#e1e1e1;border:1px solid #adadad"></div>
<svg style="left:105px;top:943px;" width="16" height="16"><use href="#i-plusb"/></svg>
<div style="left:125px;top:941px;width:22px;height:20px;background:#cccccc;border:1px solid #bfbfbf"></div>
<svg style="left:128px;top:943px;" width="16" height="16"><use href="#i-minus"/></svg>
<div style="left:148px;top:941px;width:22px;height:20px;background:#cccccc;border:1px solid #bfbfbf"></div>
<svg style="left:151px;top:943px;" width="16" height="16"><use href="#i-up"/></svg>
<div style="left:171px;top:941px;width:22px;height:20px;background:#cccccc;border:1px solid #bfbfbf"></div>
<svg style="left:174px;top:943px;" width="16" height="16"><use href="#i-checkg"/></svg>
<div style="left:194px;top:941px;width:22px;height:20px;background:#cccccc;border:1px solid #bfbfbf"></div>
<svg style="left:197px;top:943px;" width="16" height="16"><use href="#i-xg"/></svg>
<div style="left:217px;top:941px;width:22px;height:20px;background:#e1e1e1;border:1px solid #adadad"></div>
<svg style="left:220px;top:943px;" width="16" height="16"><use href="#i-refreshb"/></svg>
<div style="left:246px;top:943px;width:259px;height:45px;border:1px solid #a0a0a0"></div>
<div style="left:254.2px;top:949.2px;width:12.7px;height:12.7px;background:#fff;border:1px solid #333"></div>
<div style="left:257.2px;top:952.2px;width:6.7px;height:6.7px;background:#333"></div>
<span class="t" style="left:269.5px;top:949.19px;height:14px;line-height:14px;font-size:11px;letter-spacing:-0.17px;">Manually <u>R</u>ated</span>
<div style="left:366px;top:948px;width:13px;height:13px;background:#fff;border:1px solid #cfcfcf"></div>
<div style="left:369px;top:951px;width:7px;height:7px;background:#c8c8c8"></div>
<span class="t d" style="left:381.5px;top:947.79px;height:14px;line-height:14px;font-size:11px;letter-spacing:-0.07px;">Override Rate Sheet</span>
<div style="left:254px;top:964px;width:176px;height:21px;border:1px solid #6b6b6b;box-shadow:inset 0 0 0 1px #fafafa;background:#f0f0f0"></div>
<div style="left:438px;top:964px;width:57px;height:21px;background:#fff;border:1px solid #d4d4d4"></div>
<svg style="left:475px;top:968.5px;" width="13" height="13"><use href="#i-lookg"/></svg>
<div style="left:0px;top:1013.5px;width:1920px;height:1px;background:#e3e3e3"></div>
<div style="left:1px;top:1016px;width:100px;height:15px;background:#ff0000"></div>
<div style="left:105px;top:1016px;width:110px;height:15px;background:#ff0000"></div>
<div style="left:219px;top:1016px;width:84px;height:15px;background:#ff0000"></div>
<div style="left:307px;top:1016px;width:84px;height:15px;background:#ff0000"></div>
<div style="left:395px;top:1016px;width:102px;height:15px;background:#ff0000"></div>
<div style="left:501px;top:1016px;width:948px;height:15px;background:#ff0000"></div>
<div style="left:1451px;top:1016px;width:13px;height:15px;background:#ff0000"></div>
<div style="left:1468px;top:1016px;width:451px;height:15px;background:#ff0000"></div>
<div style="left:577px;top:1015px;width:1px;height:16px;background:#e6f2f2"></div>
<div style="left:662px;top:1015px;width:1px;height:16px;background:#e6f2f2"></div>
<div style="left:1527px;top:1015px;width:1px;height:16px;background:#e6f2f2"></div>
<div style="left:1589px;top:1015px;width:1px;height:16px;background:#e6f2f2"></div>
<div style="left:1604px;top:1015px;width:1px;height:16px;background:#e6f2f2"></div>
<div style="left:1727px;top:1015px;width:1px;height:16px;background:#e6f2f2"></div>
<div style="left:1742px;top:1015px;width:1px;height:16px;background:#e6f2f2"></div>
<div style="left:1806px;top:1015px;width:1px;height:16px;background:#e6f2f2"></div>
<div style="left:1821px;top:1015px;width:1px;height:16px;background:#e6f2f2"></div>
<div style="left:1851px;top:1015px;width:1px;height:16px;background:#e6f2f2"></div>
<div style="left:1870px;top:1015px;width:1px;height:16px;background:#e6f2f2"></div>
<div style="left:1896px;top:1015px;width:1px;height:16px;background:#e6f2f2"></div>
<span class="s w" style="left:13.3px;top:1015.84px;height:15px;line-height:15px;font-size:12px;letter-spacing:-0.50px;">Charges: $0.00</span>
<span class="s w" style="left:116.2px;top:1015.84px;height:15px;line-height:15px;font-size:12px;letter-spacing:-0.44px;">X-Charges: $0.00</span>
<span class="s w" style="left:230.5px;top:1015.84px;height:15px;line-height:15px;font-size:12px;letter-spacing:-0.45px;">Tax-1: $0.00</span>
<span class="s w" style="left:318.5px;top:1015.84px;height:15px;line-height:15px;font-size:12px;letter-spacing:-0.45px;">Tax-2: $0.00</span>
<span class="s w" style="left:406px;top:1015.84px;height:15px;line-height:15px;font-size:12px;letter-spacing:-0.20px;">Interliner: $0.00</span>
<span class="s w" style="left:512px;top:1015.84px;height:15px;line-height:15px;font-size:12px;letter-spacing:-0.26px;">Balanced:</span>
<span class="s w" style="left:592.3px;top:1015.84px;height:15px;line-height:15px;font-size:12px;letter-spacing:-0.36px;">Total: $0.00</span>
<span class="s w" style="left:1479.3px;top:1015.84px;height:15px;line-height:15px;font-size:12px;letter-spacing:-0.87px;">PROD5</span>
<span class="s w" style="left:1528px;top:1015.84px;height:15px;line-height:15px;font-size:12px;letter-spacing:-0.88px;">ONT_LIVE</span>
<span class="s w" style="left:1605px;top:1015.84px;height:15px;line-height:15px;font-size:12px;letter-spacing:-0.13px;">Pride Group Logistics</span>
<span class="s w" style="left:1743px;top:1015.84px;height:15px;line-height:15px;font-size:12px;letter-spacing:-0.88px;">SSARAIVA</span>
<span class="s w" style="left:1822px;top:1015.84px;height:15px;line-height:15px;font-size:12px;letter-spacing:-0.12px;">cap</span>
<span class="s w" style="left:1861.3px;top:1015.84px;height:15px;line-height:15px;font-size:12px;letter-spacing:0.22px;">NUM</span>
<div style="left:578px;top:1016px;width:6px;height:15px;overflow:hidden"><span class="s w" style="left:0;top:0.3px;height:15px;line-height:15px;font-size:12px">u</span></div>
<div style="left:663px;top:1016px;width:4px;height:15px;overflow:hidden"><span class="s w" style="left:0;top:0.3px;height:15px;line-height:15px;font-size:12px">)</span></div>
<div style="left:1590.5px;top:1016px;width:5px;height:15px;overflow:hidden"><span class="s w" style="left:0;top:0.3px;height:15px;line-height:15px;font-size:12px">v</span></div>
<div style="left:1728.5px;top:1016px;width:4px;height:15px;overflow:hidden"><span class="s w" style="left:0;top:0.3px;height:15px;line-height:15px;font-size:12px">c</span></div>
<div style="left:1807.5px;top:1016px;width:6px;height:15px;overflow:hidden"><span class="s w" style="left:0;top:0.3px;height:15px;line-height:15px;font-size:12px">/.</span></div>
<div style="left:1852px;top:1016px;width:4.5px;height:15px;overflow:hidden"><span class="s w" style="left:0;top:0.3px;height:15px;line-height:15px;font-size:12px">a</span></div>
<div style="left:1897.5px;top:1016px;width:4.5px;height:15px;overflow:hidden"><span class="s w" style="left:0;top:0.3px;height:15px;line-height:15px;font-size:12px">J</span></div>
<div style="left:0px;top:1031.5px;width:1920px;height:48.5px;background:linear-gradient(90deg,#fbebd9 0%,#f9e9da 45%,#f1e0d8 75%,#ecdbd6 100%);border-top:1px solid #d9cfc6"></div>
<svg style="left:20px;top:1046px;" width="22" height="18" viewBox="0 0 22 18"><rect x="0" y="1" width="19" height="14" rx="2" fill="#2fb4f0"/><rect x="19" y="4" width="2.5" height="11" fill="#0f5fb8"/><rect x="0" y="11" width="19" height="4" rx="1.5" fill="#1591dd"/><rect x="3" y="4" width="3" height="8" fill="#fff"/><rect x="8" y="8" width="3" height="4" fill="#fff"/><rect x="13" y="6" width="3" height="6" fill="#fff"/></svg>
<div style="left:30px;top:1038px;width:16px;height:16px;background:#c42b1c;border-radius:8px"></div>
<span class="s w" style="left:30px;top:1039.49px;height:14px;line-height:14px;font-size:11px;width:16px;text-align:center;letter-spacing:-0.20px;">3</span>
<span class="s" style="left:50px;top:1039.84px;height:16px;line-height:16px;font-size:12px;letter-spacing:-0.15px;color:#1b1b1b">Finance headline</span>
<span class="s" style="left:50px;top:1055.84px;height:16px;line-height:16px;font-size:12px;letter-spacing:-0.29px;color:#5f5b57">Japan fails to se...</span>
<svg style="left:551px;top:1045px;" width="24" height="24" viewBox="0 0 24 24"><defs><linearGradient id="wg" x1="0" y1="0" x2="1" y2="1"><stop offset="0" stop-color="#4cc2ff"/><stop offset="1" stop-color="#0a6cd0"/></linearGradient></defs><rect x="0" y="0" width="11.2" height="11.2" fill="url(#wg)"/><rect x="12.4" y="0" width="11.2" height="11.2" fill="url(#wg)"/><rect x="0" y="12.4" width="11.2" height="11.2" fill="url(#wg)"/><rect x="12.4" y="12.4" width="11.2" height="11.2" fill="url(#wg)"/></svg>
<div style="left:587px;top:1040px;width:220px;height:32px;background:#fef8f0;border:1px solid #ead9c6;border-radius:16px"></div>
<svg style="left:597px;top:1047px;" width="18" height="18" viewBox="0 0 18 18"><circle cx="7.2" cy="7.2" r="5.2" stroke="#1f1f1f" stroke-width="1.6" fill="none"/><path d="M11 11L15.2 15.4" stroke="#1f1f1f" stroke-width="1.8" stroke-linecap="round"/></svg>
<span class="s" style="left:624.3px;top:1046.65px;height:18px;line-height:18px;font-size:14px;letter-spacing:-0.54px;color:#5a5855">Search</span>
<svg style="left:755px;top:1044px;" width="47" height="25"><use href="#i-garden"/></svg>
<svg style="left:818px;top:1044px;" width="26" height="24"><use href="#i-taskview"/></svg>
<svg style="left:862px;top:1044px;" width="26" height="24"><use href="#i-folder"/></svg>
<svg style="left:906px;top:1043px;" width="26" height="26"><use href="#i-edge"/></svg>
<svg style="left:950px;top:1044px;" width="26" height="24"><use href="#i-store"/></svg>
<svg style="left:995px;top:1044px;" width="25" height="24"><use href="#i-lapp"/></svg>
<div style="left:1008px;top:1039px;width:16px;height:16px;background:#1080dc;border-radius:8px"></div>
<span class="s w" style="left:1008px;top:1039.99px;height:14px;line-height:14px;font-size:11px;width:16px;text-align:center;letter-spacing:-0.20px;">5</span>
<svg style="left:1038px;top:1044px;" width="26" height="24"><use href="#i-outlook"/></svg>
<div style="left:1052px;top:1039px;width:16px;height:16px;background:#0f5fb4;border-radius:8px"></div>
<svg style="left:1055.5px;top:1043px;" width="9" height="8" viewBox="0 0 9 8"><rect x="0.5" y="0.5" width="8" height="6" rx="1" fill="none" stroke="#fff" stroke-width="1"/><path d="M0.8 1L4.5 4L8.2 1" stroke="#fff" stroke-width="0.9" fill="none"/></svg>
<svg style="left:1083px;top:1043.5px;" width="24" height="24"><use href="#i-chrome"/></svg>
<svg style="left:1128.5px;top:1045.5px;" width="21" height="21"><use href="#i-qapp"/></svg>
<svg style="left:1170px;top:1044px;" width="26" height="24"><use href="#i-nx"/></svg>
<svg style="left:1215px;top:1044px;" width="24" height="24"><use href="#i-tv"/></svg>
<div style="left:1251px;top:1036px;width:40px;height:40px;background:#ecb3ae;border-radius:5px"></div>
<svg style="left:1258px;top:1045px;" width="26" height="22"><use href="#i-teams"/></svg>
<div style="left:1272px;top:1039px;width:16px;height:16px;background:#c42b1c;border-radius:8px"></div>
<span class="s w" style="left:1272px;top:1039.99px;height:14px;line-height:14px;font-size:11px;width:16px;text-align:center;letter-spacing:-0.20px;">1</span>
<div style="left:1267.5px;top:1072px;width:6.5px;height:3px;background:#c42b1c;border-radius:1.5px"></div>
<svg style="left:1303px;top:1044px;" width="24" height="24"><use href="#i-signbig"/></svg>
<div style="left:1340px;top:1036px;width:38px;height:40px;background:#faf0ea;border-radius:5px;border:1px solid #f1e3da"></div>
<svg style="left:1347px;top:1043.8px;" width="24" height="24"><use href="#i-spiral"/></svg>
<div style="left:1351px;top:1072px;width:16px;height:3px;background:#0f7bd8;border-radius:1.5px"></div>
<div style="left:915.8px;top:1072px;width:6px;height:3px;background:#958e88;border-radius:1.5px"></div>
<div style="left:1047.8px;top:1072px;width:6px;height:3px;background:#958e88;border-radius:1.5px"></div>
<div style="left:1135.8px;top:1072px;width:6px;height:3px;background:#958e88;border-radius:1.5px"></div>
<div style="left:1180px;top:1072px;width:6px;height:3px;background:#958e88;border-radius:1.5px"></div>
<div style="left:1312px;top:1072px;width:6px;height:3px;background:#958e88;border-radius:1.5px"></div>
<svg style="left:1695px;top:1051px;" width="12" height="9" viewBox="0 0 12 9"><path d="M1.2 7.2L6 2.2L10.8 7.2" stroke="#1b1b1b" stroke-width="1.5" fill="none"/></svg>
<svg style="left:1724.5px;top:1050px;" width="18" height="12" viewBox="0 0 18 12"><path d="M5.5 11.5H14a3.3 3.3 0 0 0 .5-6.5A4.6 4.6 0 0 0 6 3.6 3.9 3.9 0 0 0 5.5 11.5Z" fill="#0f6cbd"/><path d="M3 11.5H13.2a3 3 0 0 0 1-5.6L6.5 8.6 2.6 6.2A3 3 0 0 0 3 11.5Z" fill="#28a8ea"/></svg>
<svg style="left:1758px;top:1047.5px;" width="14" height="17" viewBox="0 0 14 17"><rect x="4.6" y="0.8" width="4.8" height="9" rx="2.4" fill="none" stroke="#2b5fc2" stroke-width="1.3"/><path d="M1.8 7.5a5.2 5.2 0 0 0 10.4 0M7 12.8V16" stroke="#2b5fc2" stroke-width="1.3" fill="none"/></svg>
<svg style="left:1788px;top:1047.5px;" width="18" height="17" viewBox="0 0 18 17"><path d="M12.5 2V1H1.2V11.5H12.5M5 15.5H12M6.5 12V15.5M10 12V15.5M14.3 5.5V15.5" stroke="#1b1b1b" stroke-width="1.2" fill="none"/><rect x="12.6" y="1.2" width="3.4" height="4.4" rx="1" fill="none" stroke="#1b1b1b" stroke-width="1.1"/></svg>
<svg style="left:1812.5px;top:1049px;" width="17" height="14" viewBox="0 0 17 14"><path d="M1 4.8H3.6L7 1.5V12.5L3.6 9.2H1Z" fill="none" stroke="#1b1b1b" stroke-width="1.1" stroke-linejoin="round"/><path d="M9.3 4.6a3.4 3.4 0 0 1 0 4.8M11.4 2.8a6 6 0 0 1 0 8.4" stroke="#1b1b1b" stroke-width="1.1" fill="none"/><path d="M13.6 1.2a8.4 8.4 0 0 1 0 11.6" stroke="#bdb3ad" stroke-width="1" fill="none"/></svg>
<span class="s" style="right:19.6px;top:1039.84px;height:16px;line-height:16px;font-size:12px;text-align:right;letter-spacing:-0.24px;color:#1b1b1b">9:22 AM</span>
<span class="s" style="right:19.6px;top:1055.84px;height:16px;line-height:16px;font-size:12px;text-align:right;letter-spacing:-0.15px;color:#1b1b1b">3/12/2025</span>
</body></html>
